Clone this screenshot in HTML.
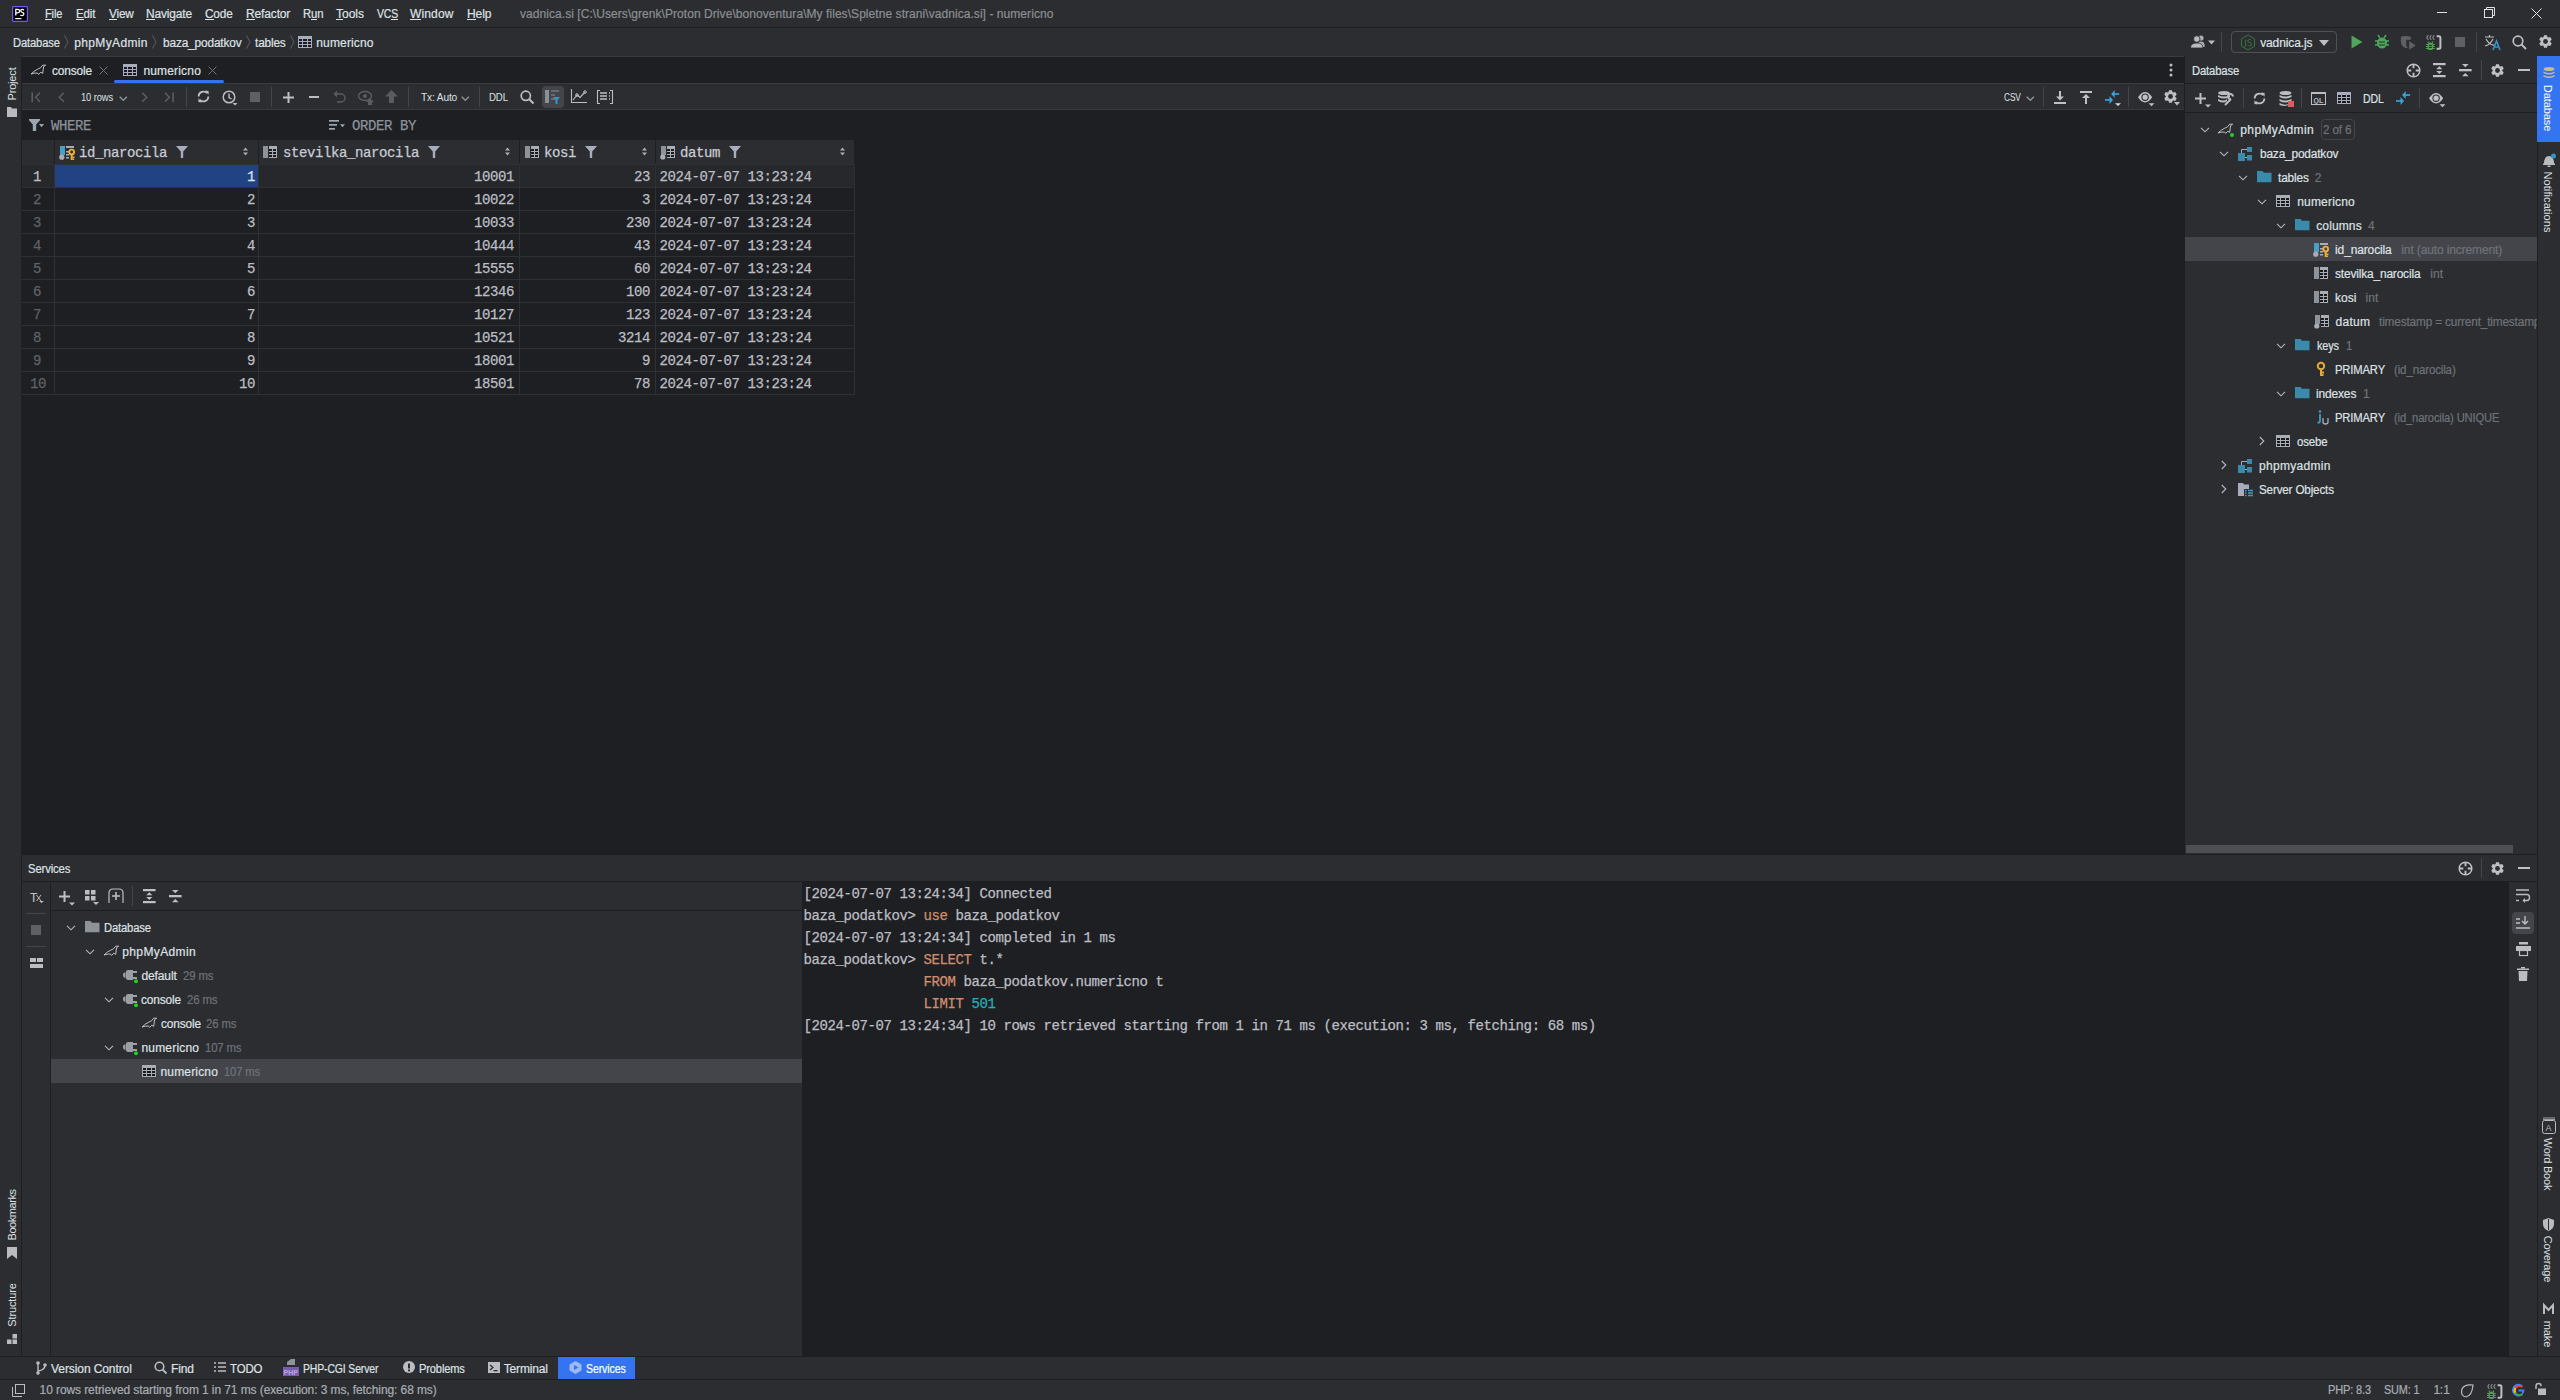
<!DOCTYPE html>
<html><head><meta charset="utf-8"><title>PhpStorm</title>
<style>
html,body{margin:0;padding:0;width:2560px;height:1400px;overflow:hidden;background:#1E1F22;}
div,svg{position:absolute;}
.t{white-space:pre;}
svg{overflow:visible;}
</style></head><body>
<div style="left:0px;top:0px;width:2560px;height:27px;background:#2B2D30;"></div>
<div style="left:0px;top:27px;width:2560px;height:1px;background:#1E1F22;"></div>
<div style="left:0px;top:28px;width:2560px;height:28px;background:#2B2D30;"></div>
<div style="left:0px;top:56px;width:21px;height:1300px;background:#2B2D30;"></div>
<div style="left:21px;top:56px;width:1px;height:1300px;background:#1E1F22;"></div>
<div style="left:2537px;top:56px;width:1px;height:1300px;background:#1E1F22;"></div>
<div style="left:2538px;top:56px;width:22px;height:1300px;background:#2B2D30;"></div>
<div style="left:22px;top:56px;width:2162px;height:1px;background:#393B40;"></div>
<div style="left:22px;top:57px;width:2162px;height:26px;background:#1E1F22;"></div>
<div style="left:22px;top:83px;width:2162px;height:1px;background:#393B40;"></div>
<div style="left:22px;top:84px;width:2162px;height:25px;background:#2B2D30;"></div>
<div style="left:22px;top:109px;width:2162px;height:1px;background:#393B40;"></div>
<div style="left:22px;top:110px;width:2162px;height:745px;background:#1E1F22;"></div>
<div style="left:2184px;top:56px;width:1px;height:800px;background:#1E1F22;"></div>
<div style="left:2185px;top:56px;width:352px;height:27px;background:#2B2D30;"></div>
<div style="left:2185px;top:83px;width:352px;height:1px;background:#1E1F22;"></div>
<div style="left:2185px;top:84px;width:352px;height:28px;background:#2B2D30;"></div>
<div style="left:2185px;top:112px;width:352px;height:1px;background:#1E1F22;"></div>
<div style="left:2185px;top:113px;width:352px;height:742px;background:#2B2D30;"></div>
<div style="left:2186px;top:845px;width:327px;height:8px;background:#4D4F53;border-radius:0"></div>
<div style="left:22px;top:854px;width:2515px;height:1px;background:#1E1F22;"></div>
<div style="left:22px;top:855px;width:2515px;height:26px;background:#2B2D30;"></div>
<div style="left:22px;top:881px;width:2515px;height:1px;background:#1E1F22;"></div>
<div style="left:22px;top:882px;width:28px;height:474px;background:#2B2D30;"></div>
<div style="left:50px;top:882px;width:1px;height:474px;background:#1E1F22;"></div>
<div style="left:51px;top:882px;width:751px;height:28px;background:#2B2D30;"></div>
<div style="left:51px;top:910px;width:751px;height:1px;background:#1E1F22;"></div>
<div style="left:51px;top:911px;width:751px;height:445px;background:#2B2D30;"></div>
<div style="left:802px;top:882px;width:1707px;height:474px;background:#1E1F22;"></div>
<div style="left:2508px;top:882px;width:1px;height:474px;background:#1E1F22;"></div>
<div style="left:2509px;top:882px;width:28px;height:474px;background:#2B2D30;"></div>
<div style="left:0px;top:1356px;width:2560px;height:1px;background:#1E1F22;"></div>
<div style="left:0px;top:1357px;width:2560px;height:22px;background:#2B2D30;"></div>
<div style="left:0px;top:1379px;width:2560px;height:1px;background:#1E1F22;"></div>
<div style="left:0px;top:1380px;width:2560px;height:20px;background:#2B2D30;"></div>
<svg style="left:12px;top:6px;" width="16" height="16" viewBox="0 0 16 16"><rect x="0.6" y="0.6" width="14.8" height="14.8" rx="0.8" fill="#000" stroke="#7357FF" stroke-width="1.2"/><path d="M3.8 9.6V3.4H5.8Q7.6 3.4 7.6 5.1Q7.6 6.8 5.8 6.8H3.8" fill="none" stroke="#fff" stroke-width="1.3"/><path d="M11.9 4.2Q11.2 3.4 10.2 3.4Q8.7 3.4 8.7 4.8Q8.7 5.9 10.2 6.3Q11.9 6.7 11.9 8.1Q11.9 9.6 10.1 9.6Q9 9.6 8.4 8.8" fill="none" stroke="#fff" stroke-width="1.3"/><rect x="3.2" y="12" width="6.2" height="1.2" fill="#fff"/></svg>
<div class="t" style="left:45px;top:8px;font:12px/12px 'Liberation Sans',sans-serif;color:#DFE1E5;letter-spacing:-0.150px;transform:scaleX(0.9207);transform-origin:0px 0;-webkit-text-stroke:0.2px #DFE1E5;">File</div>
<div style="left:45px;top:19px;width:7px;height:1px;background:#DFE1E5;"></div>
<div class="t" style="left:76px;top:8px;font:12px/12px 'Liberation Sans',sans-serif;color:#DFE1E5;letter-spacing:-0.150px;transform:scaleX(0.9611);transform-origin:0px 0;-webkit-text-stroke:0.2px #DFE1E5;">Edit</div>
<div style="left:76px;top:19px;width:8px;height:1px;background:#DFE1E5;"></div>
<div class="t" style="left:109px;top:8px;font:12px/12px 'Liberation Sans',sans-serif;color:#DFE1E5;letter-spacing:-0.150px;transform:scaleX(0.9785);transform-origin:0px 0;-webkit-text-stroke:0.2px #DFE1E5;">View</div>
<div style="left:109px;top:19px;width:8px;height:1px;background:#DFE1E5;"></div>
<div class="t" style="left:146px;top:8px;font:12px/12px 'Liberation Sans',sans-serif;color:#DFE1E5;letter-spacing:-0.150px;transform:scaleX(0.9957);transform-origin:0px 0;-webkit-text-stroke:0.2px #DFE1E5;">Navigate</div>
<div style="left:146px;top:19px;width:9px;height:1px;background:#DFE1E5;"></div>
<div class="t" style="left:205px;top:8px;font:12px/12px 'Liberation Sans',sans-serif;color:#DFE1E5;letter-spacing:-0.150px;transform:scaleX(0.9807);transform-origin:0px 0;-webkit-text-stroke:0.2px #DFE1E5;">Code</div>
<div style="left:205px;top:19px;width:9px;height:1px;background:#DFE1E5;"></div>
<div class="t" style="left:246px;top:8px;font:12px/12px 'Liberation Sans',sans-serif;color:#DFE1E5;letter-spacing:-0.143px;-webkit-text-stroke:0.2px #DFE1E5;">Refactor</div>
<div style="left:246px;top:19px;width:9px;height:1px;background:#DFE1E5;"></div>
<div class="t" style="left:303px;top:8px;font:12px/12px 'Liberation Sans',sans-serif;color:#DFE1E5;letter-spacing:-0.150px;transform:scaleX(0.9447);transform-origin:0px 0;-webkit-text-stroke:0.2px #DFE1E5;">Run</div>
<div style="left:311px;top:19px;width:6px;height:1px;background:#DFE1E5;"></div>
<div class="t" style="left:336px;top:8px;font:12px/12px 'Liberation Sans',sans-serif;color:#DFE1E5;letter-spacing:0.000px;-webkit-text-stroke:0.2px #DFE1E5;">Tools</div>
<div style="left:336px;top:19px;width:7px;height:1px;background:#DFE1E5;"></div>
<div class="t" style="left:377px;top:8px;font:12px/12px 'Liberation Sans',sans-serif;color:#DFE1E5;letter-spacing:-0.150px;transform:scaleX(0.8704);transform-origin:0px 0;-webkit-text-stroke:0.2px #DFE1E5;">VCS</div>
<div style="left:391px;top:19px;width:7px;height:1px;background:#DFE1E5;"></div>
<div class="t" style="left:410px;top:8px;font:12px/12px 'Liberation Sans',sans-serif;color:#DFE1E5;letter-spacing:0.150px;-webkit-text-stroke:0.2px #DFE1E5;">Window</div>
<div style="left:410px;top:19px;width:11px;height:1px;background:#DFE1E5;"></div>
<div class="t" style="left:467px;top:8px;font:12px/12px 'Liberation Sans',sans-serif;color:#DFE1E5;letter-spacing:-0.083px;-webkit-text-stroke:0.2px #DFE1E5;">Help</div>
<div style="left:467px;top:19px;width:9px;height:1px;background:#DFE1E5;"></div>
<div class="t" style="left:520px;top:8px;font:12px/12px 'Liberation Sans',sans-serif;color:#8C8F94;letter-spacing:0.059px;-webkit-text-stroke:0.2px #8C8F94;">vadnica.si [C:\Users\grenk\Proton Drive\bonoventura\My files\Spletne strani\vadnica.si] - numericno</div>
<div style="left:2437px;top:12px;width:10px;height:1px;background:#DFE1E5;"></div>
<svg style="left:2484px;top:7px;" width="11" height="11" viewBox="0 0 11 11"><rect x="0.5" y="2.5" width="8" height="8" fill="none" stroke="#DFE1E5"/><path d="M2.5 2.5V0.5H10.5V8.5H8.5" fill="none" stroke="#DFE1E5"/></svg>
<svg style="left:2531px;top:8px;" width="11" height="11" viewBox="0 0 11 11"><path d="M0.5 0.5L10.5 10.5M10.5 0.5L0.5 10.5" stroke="#DFE1E5" stroke-width="1"/></svg>
<div class="t" style="left:12.5px;top:37px;font:12px/12px 'Liberation Sans',sans-serif;color:#DFE1E5;letter-spacing:-0.150px;transform:scaleX(0.9323);transform-origin:0px 0;-webkit-text-stroke:0.2px #DFE1E5;">Database</div>
<svg style="left:64px;top:35px;" width="5" height="14" viewBox="0 0 5 14"><path d="M0.5 0.5L4 7L0.5 13.5" fill="none" stroke="#5A5D63" stroke-width="1"/></svg>
<div class="t" style="left:74.25px;top:37px;font:12px/12px 'Liberation Sans',sans-serif;color:#DFE1E5;letter-spacing:0.361px;-webkit-text-stroke:0.2px #DFE1E5;">phpMyAdmin</div>
<svg style="left:152px;top:35px;" width="5" height="14" viewBox="0 0 5 14"><path d="M0.5 0.5L4 7L0.5 13.5" fill="none" stroke="#5A5D63" stroke-width="1"/></svg>
<div class="t" style="left:162.5px;top:37px;font:12px/12px 'Liberation Sans',sans-serif;color:#DFE1E5;letter-spacing:-0.150px;transform:scaleX(0.9880);transform-origin:0px 0;-webkit-text-stroke:0.2px #DFE1E5;">baza_podatkov</div>
<svg style="left:246px;top:35px;" width="5" height="14" viewBox="0 0 5 14"><path d="M0.5 0.5L4 7L0.5 13.5" fill="none" stroke="#5A5D63" stroke-width="1"/></svg>
<div class="t" style="left:255px;top:37px;font:12px/12px 'Liberation Sans',sans-serif;color:#DFE1E5;letter-spacing:-0.150px;transform:scaleX(0.9840);transform-origin:0px 0;-webkit-text-stroke:0.2px #DFE1E5;">tables</div>
<svg style="left:290px;top:35px;" width="5" height="14" viewBox="0 0 5 14"><path d="M0.5 0.5L4 7L0.5 13.5" fill="none" stroke="#5A5D63" stroke-width="1"/></svg>
<svg style="left:298px;top:36px;" width="14" height="12" viewBox="0 0 14 12"><rect x="0" y="0" width="14" height="12" fill="#A8ADBD"/><rect x="1" y="3" width="3" height="2" fill="#1A1B1E"/><rect x="5" y="3" width="4" height="2" fill="#1A1B1E"/><rect x="10" y="3" width="3" height="2" fill="#1A1B1E"/><rect x="1" y="6" width="3" height="2" fill="#1A1B1E"/><rect x="5" y="6" width="4" height="2" fill="#1A1B1E"/><rect x="10" y="6" width="3" height="2" fill="#1A1B1E"/><rect x="1" y="9" width="3" height="2" fill="#1A1B1E"/><rect x="5" y="9" width="4" height="2" fill="#1A1B1E"/><rect x="10" y="9" width="3" height="2" fill="#1A1B1E"/></svg>
<div class="t" style="left:316.25px;top:37px;font:12px/12px 'Liberation Sans',sans-serif;color:#DFE1E5;letter-spacing:0.156px;-webkit-text-stroke:0.2px #DFE1E5;">numericno</div>
<svg style="left:2190px;top:35px;" width="26" height="14" viewBox="0 0 26 14"><circle cx="11" cy="3" r="2.6" fill="#A9ACB1"/><path d="M8 13V9.5Q8 6.5 11 6.5Q14.6 6.5 14.6 10.5V12H8Z" fill="#A9ACB1"/><circle cx="6.8" cy="4" r="3.2" fill="#B8BABF" stroke="#2B2D30" stroke-width="0.8"/><path d="M0.5 13Q0.5 8 6.8 8Q13 8 13 13Z" fill="#B8BABF" stroke="#2B2D30" stroke-width="0.8"/><path d="M18 5.5H25L21.5 9.5Z" fill="#B8BABF"/></svg>
<div style="left:2221px;top:32px;width:1px;height:20px;background:#43454A;"></div>
<div style="left:2231px;top:31px;width:106px;height:22px;background:transparent;border:1px solid #4E5157;border-radius:4px;box-sizing:border-box"></div>
<svg style="left:2240px;top:34px;" width="16" height="17" viewBox="0 0 16 17"><path d="M8 1L14.5 4.8V12.2L8 16L1.5 12.2V4.8Z" fill="none" stroke="#3B7A43" stroke-width="0.9"/><path d="M5.6 5.5V11.5Q5.6 13 4.2 13" fill="none" stroke="#3B7A43" stroke-width="0.9"/><path d="M11.5 6.4Q10.8 5.5 9.6 5.5Q7.8 5.5 7.8 7Q7.8 8.3 9.6 8.6Q11.6 8.9 11.6 10.3Q11.6 11.7 9.6 11.7Q8.2 11.7 7.6 10.8" fill="none" stroke="#3B7A43" stroke-width="0.9"/></svg>
<div class="t" style="left:2260.2px;top:37px;font:12px/12px 'Liberation Sans',sans-serif;color:#DFE1E5;letter-spacing:-0.122px;-webkit-text-stroke:0.2px #DFE1E5;">vadnica.js</div>
<svg style="left:2319px;top:40px;" width="10" height="6" viewBox="0 0 10 6"><path d="M0 0H10L5 6Z" fill="#BBBDC1"/></svg>
<svg style="left:2351px;top:35px;" width="12" height="14" viewBox="0 0 12 14"><path d="M0.5 0.5L11.5 7L0.5 13.5Z" fill="#4FA65B"/></svg>
<svg style="left:2375px;top:34px;" width="14" height="15" viewBox="0 0 14 15"><ellipse cx="7" cy="9" rx="5" ry="5.5" fill="#4FA65B"/><path d="M3 1L5 4M11 1L9 4M0 7H3M11 7H14M0 11H3M11 11H14M3 9H11" stroke="#4FA65B" stroke-width="1.4"/><path d="M4 8H10M4 11H10" stroke="#2B2D30" stroke-width="1.2"/></svg>
<svg style="left:2396px;top:30px;" width="22" height="22" viewBox="0 0 22 22"><path d="M4.9 6.8Q9.8 5.4 14.8 6.8V9.8H10.2V16Q10.2 16.9 11.6 16.3V17.3Q10.6 18.2 9.8 18.2Q4.9 16 4.9 11.5Z" fill="#5E6064"/><path d="M13.1 11.1V19.7L19.7 15.4Z" fill="#5E6064"/></svg>
<svg style="left:2426.4px;top:35px;" width="16" height="16" viewBox="0 0 16 16"><path d="M2.2 4.8C0.7 3.6 0.7 1.4 2.2 0.2M5.2 4.8C3.7 3.6 3.7 1.4 5.2 0.2M8.2 4.8C6.7 3.6 6.7 1.4 8.2 0.2" fill="none" stroke="#BEC0C4" stroke-width="0.9"/><path d="M10.6 1.3H12.9Q14.4 1.3 14.4 2.8V12.2Q14.4 13.7 12.9 13.7H10.6" fill="none" stroke="#BEC0C4" stroke-width="2"/><rect x="1.6" y="7.6" width="5.6" height="7.4" rx="2.6" fill="#4DA64D"/><path d="M0 9.5H8.8M0 11.5H8.8M0 13.5H8.8M2.6 7.9L1.9 6.6M6.2 7.9L6.9 6.6" stroke="#4DA64D" stroke-width="1.1"/><rect x="2.9" y="9.9" width="3" height="1.1" fill="#2B2D30"/><rect x="2.9" y="11.9" width="3" height="1.1" fill="#2B2D30"/></svg>
<div style="left:2455px;top:37px;width:10px;height:10px;background:#5E6064;"></div>
<div style="left:2476px;top:32px;width:1px;height:20px;background:#43454A;"></div>
<svg style="left:2484px;top:34px;" width="17" height="16" viewBox="0 0 17 16"><path d="M1 3H10M5.5 1V3M2 5Q6 12 11 11M9 5Q6 11 1 12" fill="none" stroke="#BBBDC1" stroke-width="1.2"/><path d="M9 16L12.5 7L16 16M10.5 13H14.5" fill="none" stroke="#3592C4" stroke-width="1.6"/></svg>
<svg style="left:2512px;top:35px;" width="15" height="15" viewBox="0 0 15 15"><circle cx="6" cy="6" r="4.8" fill="none" stroke="#BBBDC1" stroke-width="1.7"/><path d="M9.5 9.5L14 14" stroke="#BBBDC1" stroke-width="2"/></svg>
<svg style="left:2539px;top:35px;" width="13" height="13" viewBox="0 0 13 13"><g transform="scale(1.0)"><path d="M4.44 2.28L5.04 0.17L7.96 0.17L8.56 2.28L9.13 2.60L11.25 2.07L12.72 4.60L11.19 6.17L11.19 6.83L12.72 8.40L11.25 10.93L9.13 10.40L8.56 10.72L7.96 12.83L5.04 12.83L4.44 10.72L3.87 10.40L1.75 10.93L0.28 8.40L1.81 6.83L1.81 6.17L0.28 4.60L1.75 2.07L3.87 2.60Z" fill="#BEC0C4"/><circle cx="6.5" cy="6.5" r="2.4" fill="#2B2D30"/></g></svg>
<div style="left:12.2px;top:83.9px;width:0;height:0"><div style="position:absolute;left:0;top:0;transform:translate(-50%,-50%) rotate(-90deg);font:11px/11px 'Liberation Sans',sans-serif;letter-spacing:-0.167px;color:#DFE1E5;white-space:nowrap">Project</div></div>
<svg style="left:7px;top:107px;" width="10" height="10" viewBox="0 0 10 10"><path d="M0 0H4L5 1.5H10V10H0Z" fill="#B9BBBE"/></svg>
<div style="left:12.2px;top:1215.2px;width:0;height:0"><div style="position:absolute;left:0;top:0;transform:translate(-50%,-50%) rotate(-90deg);font:11px/11px 'Liberation Sans',sans-serif;letter-spacing:-0.450px;color:#DFE1E5;white-space:nowrap">Bookmarks</div></div>
<svg style="left:7px;top:1247px;" width="10" height="12" viewBox="0 0 10 12"><path d="M0 0H10V12L5 8L0 12Z" fill="#B9BBBE"/></svg>
<div style="left:12.2px;top:1305.0px;width:0;height:0"><div style="position:absolute;left:0;top:0;transform:translate(-50%,-50%) rotate(-90deg);font:11px/11px 'Liberation Sans',sans-serif;letter-spacing:-0.125px;color:#DFE1E5;white-space:nowrap">Structure</div></div>
<svg style="left:7px;top:1334px;" width="10" height="10" viewBox="0 0 10 10"><rect x="5.5" y="0" width="4.5" height="4.5" fill="#B9BBBE"/><rect x="0" y="5.5" width="4.5" height="4.5" fill="#B9BBBE"/><rect x="5.5" y="5.5" width="4.5" height="4.5" fill="#B9BBBE"/></svg>
<div style="left:2537px;top:56px;width:23px;height:86px;background:#3574F0;"></div>
<svg style="left:2543px;top:67px;" width="12" height="13" viewBox="0 0 12 13"><ellipse cx="6" cy="2" rx="5.5" ry="2" fill="#C7B99A"/><path d="M0.5 4.5Q6 7.5 11.5 4.5V6Q6 9 0.5 6ZM0.5 8Q6 11 11.5 8V9.5Q6 12.5 0.5 9.5Z" fill="#C7B99A"/></svg>
<div style="left:2546.5px;top:108.2px;width:0;height:0"><div style="position:absolute;left:0;top:0;transform:translate(-50%,-50%) rotate(90deg);font:11px/11px 'Liberation Sans',sans-serif;letter-spacing:-0.086px;color:#FFFFFF;white-space:nowrap">Database</div></div>
<svg style="left:2542px;top:153px;" width="14" height="14" viewBox="0 0 14 14"><path d="M2 11Q2 3 7 3Q12 3 12 11Z" fill="#B9BBBE"/><rect x="1" y="10.5" width="12" height="1.5" fill="#B9BBBE"/><rect x="5.5" y="12.5" width="3" height="1.5" fill="#B9BBBE"/><circle cx="11.5" cy="3" r="2.5" fill="#3592C4"/></svg>
<div style="left:2546.5px;top:201.5px;width:0;height:0"><div style="position:absolute;left:0;top:0;transform:translate(-50%,-50%) rotate(90deg);font:11px/11px 'Liberation Sans',sans-serif;letter-spacing:0.083px;color:#DFE1E5;white-space:nowrap">Notifications</div></div>
<svg style="left:2542px;top:1117px;" width="14" height="17" viewBox="0 0 14 17"><rect x="0.5" y="3.5" width="13" height="13" rx="2" fill="none" stroke="#B9BBBE"/><path d="M1 1H13M1 2.5H13" stroke="#B9BBBE" stroke-width="0.8"/><text x="3.5" y="13.5" font-family="Liberation Sans" font-size="9" fill="#B9BBBE">A</text></svg>
<div style="left:2546.5px;top:1164.25px;width:0;height:0"><div style="position:absolute;left:0;top:0;transform:translate(-50%,-50%) rotate(90deg);font:11px/11px 'Liberation Sans',sans-serif;letter-spacing:-0.188px;color:#DFE1E5;white-space:nowrap">Word Book</div></div>
<svg style="left:2543px;top:1218px;" width="11" height="13" viewBox="0 0 11 13"><path d="M5.5 0L11 2V6Q11 11 5.5 13Q0 11 0 6V2Z" fill="#B9BBBE"/><path d="M5.5 1V12" stroke="#2B2D30" stroke-width="1"/></svg>
<div style="left:2546.5px;top:1258.5px;width:0;height:0"><div style="position:absolute;left:0;top:0;transform:translate(-50%,-50%) rotate(90deg);font:11px/11px 'Liberation Sans',sans-serif;letter-spacing:-0.143px;color:#DFE1E5;white-space:nowrap">Coverage</div></div>
<svg style="left:2543px;top:1304px;" width="11" height="10" viewBox="0 0 11 10"><path d="M1 10V1L5.5 6L10 1V10" fill="none" stroke="#B9BBBE" stroke-width="2"/></svg>
<div style="left:2546.5px;top:1334.1px;width:0;height:0"><div style="position:absolute;left:0;top:0;transform:translate(-50%,-50%) rotate(90deg);font:11px/11px 'Liberation Sans',sans-serif;letter-spacing:-0.067px;color:#DFE1E5;white-space:nowrap">make</div></div>
<svg style="left:26.7px;top:60.8px;" width="21" height="18" viewBox="0 0 21 18"><path d="M4 13 L7.5 10 Q11 8 13.8 6.6 L15.6 4.2 L18.7 4.2 L16.6 5.6 L15.7 12.4 L13.8 11.2 L11.6 13.4 L10.5 12 Q7 11.8 4 13 Z" fill="none" stroke="#BFC1C6" stroke-width="1" stroke-linejoin="round"/></svg>
<div class="t" style="left:51.5px;top:65px;font:12px/12px 'Liberation Sans',sans-serif;color:#DFE1E5;letter-spacing:-0.150px;transform:scaleX(0.9878);transform-origin:0px 0;-webkit-text-stroke:0.2px #DFE1E5;">console</div>
<svg style="left:99px;top:66px;" width="9" height="9" viewBox="0 0 9 9"><path d="M0.5 0.5L8.5 8.5M8.5 0.5L0.5 8.5" stroke="#6F737A" stroke-width="1"/></svg>
<svg style="left:123px;top:64px;" width="14" height="12" viewBox="0 0 14 12"><rect x="0" y="0" width="14" height="12" fill="#A8ADBD"/><rect x="1" y="3" width="3" height="2" fill="#1A1B1E"/><rect x="5" y="3" width="4" height="2" fill="#1A1B1E"/><rect x="10" y="3" width="3" height="2" fill="#1A1B1E"/><rect x="1" y="6" width="3" height="2" fill="#1A1B1E"/><rect x="5" y="6" width="4" height="2" fill="#1A1B1E"/><rect x="10" y="6" width="3" height="2" fill="#1A1B1E"/><rect x="1" y="9" width="3" height="2" fill="#1A1B1E"/><rect x="5" y="9" width="4" height="2" fill="#1A1B1E"/><rect x="10" y="9" width="3" height="2" fill="#1A1B1E"/></svg>
<div class="t" style="left:143.4px;top:65px;font:12px/12px 'Liberation Sans',sans-serif;color:#DFE1E5;letter-spacing:0.175px;-webkit-text-stroke:0.2px #DFE1E5;">numericno</div>
<svg style="left:208px;top:66px;" width="9" height="9" viewBox="0 0 9 9"><path d="M0.5 0.5L8.5 8.5M8.5 0.5L0.5 8.5" stroke="#6F737A" stroke-width="1"/></svg>
<div style="left:114px;top:80px;width:110px;height:3px;background:#3574F0;border-radius:2px"></div>
<svg style="left:2168px;top:63px;" width="6" height="14" viewBox="0 0 6 14"><circle cx="3" cy="2" r="1.5" fill="#BBBDC1"/><circle cx="3" cy="7" r="1.5" fill="#BBBDC1"/><circle cx="3" cy="12" r="1.5" fill="#BBBDC1"/></svg>
<svg style="left:30.5px;top:91.5px;" width="11" height="11" viewBox="0 0 11 11"><rect x="0.4" y="0.4" width="1.6" height="9.8" fill="#5A5D62"/><path d="M9 0.9L4.6 5.3L9 9.7" fill="none" stroke="#5A5D62" stroke-width="1.5"/></svg>
<svg style="left:57.5px;top:91.5px;" width="8" height="11" viewBox="0 0 8 11"><path d="M5.8 0.9L1.3 5.3L5.8 9.7" fill="none" stroke="#5A5D62" stroke-width="1.5"/></svg>
<div class="t" style="left:81.4px;top:92px;font:11px/11px 'Liberation Sans',sans-serif;color:#DFE1E5;letter-spacing:-0.150px;transform:scaleX(0.8530);transform-origin:0px 0;-webkit-text-stroke:0px #DFE1E5;">10 rows</div>
<svg style="left:119px;top:95.5px;" width="9" height="5" viewBox="0 0 9 5"><path d="M0.7 0.7L4.3 4.3L7.9 0.7" fill="none" stroke="#8C9098" stroke-width="1.5"/></svg>
<svg style="left:140.5px;top:91.5px;" width="8" height="11" viewBox="0 0 8 11"><path d="M1.2 0.9L5.7 5.3L1.2 9.7" fill="none" stroke="#5A5D62" stroke-width="1.5"/></svg>
<svg style="left:164px;top:91.5px;" width="11" height="11" viewBox="0 0 11 11"><rect x="8.3" y="0.4" width="1.6" height="9.8" fill="#5A5D62"/><path d="M1 0.9L5.4 5.3L1 9.7" fill="none" stroke="#5A5D62" stroke-width="1.5"/></svg>
<div style="left:186px;top:87px;width:1px;height:20px;background:#43454A;"></div>
<svg style="left:197px;top:90px;" width="13" height="13" viewBox="0 0 13 13"><path d="M1.6 6.5A4.9 4.9 0 0 1 10.2 3.3M11.4 6.5A4.9 4.9 0 0 1 2.8 9.7" fill="none" stroke="#BEC0C4" stroke-width="1.7"/><path d="M8 0.6L11.6 1V4.8ZM5 12.4L1.4 12V8.2Z" fill="#BEC0C4"/></svg>
<svg style="left:222px;top:90px;" width="16" height="16" viewBox="0 0 16 16"><circle cx="7" cy="7" r="5.8" fill="none" stroke="#BBBDC1" stroke-width="1.5"/><path d="M7 3.5V7.5L9.5 9" fill="none" stroke="#BBBDC1" stroke-width="1.4"/><path d="M10.5 13H15.5L13 15.5Z" fill="#BBBDC1"/></svg>
<div style="left:250px;top:92px;width:10px;height:10px;background:#5E6064;"></div>
<div style="left:271px;top:87px;width:1px;height:20px;background:#43454A;"></div>
<svg style="left:283px;top:92px;" width="17" height="15" viewBox="0 0 17 15"><rect x="4.5" y="0" width="2" height="11" fill="#BEC0C4"/><rect x="0" y="4.5" width="11" height="2" fill="#BEC0C4"/></svg>
<div style="left:309px;top:96px;width:10px;height:2px;background:#BBBDC1;"></div>
<svg style="left:333px;top:90px;" width="13" height="13" viewBox="0 0 13 13"><path d="M3 4H8A4 4 0 0 1 8 12H4" fill="none" stroke="#595C61" stroke-width="1.4"/><path d="M0.5 4L4 0.5V7.5Z" fill="#595C61"/></svg>
<svg style="left:358px;top:90px;" width="16" height="15" viewBox="0 0 16 15"><ellipse cx="7" cy="6" rx="6.5" ry="4.5" fill="none" stroke="#595C61" stroke-width="1.4"/><circle cx="7" cy="6" r="2" fill="#595C61"/><path d="M12 8L16 12H14V15H10V12H8Z" fill="#595C61"/></svg>
<svg style="left:385px;top:90px;" width="13" height="13" viewBox="0 0 13 13"><path d="M6.5 0L13 6.5H9V13H4V6.5H0Z" fill="#595C61"/></svg>
<div style="left:408px;top:87px;width:1px;height:20px;background:#43454A;"></div>
<div class="t" style="left:420.8px;top:92px;font:11px/11px 'Liberation Sans',sans-serif;color:#DFE1E5;letter-spacing:-0.150px;transform:scaleX(0.9217);transform-origin:0px 0;-webkit-text-stroke:0px #DFE1E5;">Tx: Auto</div>
<svg style="left:461px;top:95.5px;" width="9" height="5" viewBox="0 0 9 5"><path d="M0.7 0.7L4.3 4.3L7.9 0.7" fill="none" stroke="#8C9098" stroke-width="1.5"/></svg>
<div style="left:479px;top:87px;width:1px;height:20px;background:#43454A;"></div>
<div class="t" style="left:489px;top:92px;font:11px/11px 'Liberation Sans',sans-serif;color:#DFE1E5;letter-spacing:-0.150px;transform:scaleX(0.8756);transform-origin:0px 0;-webkit-text-stroke:0px #DFE1E5;">DDL</div>
<svg style="left:520px;top:90px;" width="14" height="14" viewBox="0 0 14 14"><circle cx="5.8" cy="5.8" r="4.6" fill="none" stroke="#BBBDC1" stroke-width="1.7"/><path d="M9.3 9.3L13.5 13.5" stroke="#BBBDC1" stroke-width="2"/></svg>
<div style="left:542px;top:86px;width:22px;height:22px;background:#43454A;border-radius:4px"></div>
<svg style="left:545px;top:90px;" width="16" height="14" viewBox="0 0 16 14"><rect x="0" y="0" width="4" height="13" fill="#8C9098"/><path d="M6 1H14M6 5H10M6 9H10" stroke="#8C9098" stroke-width="1.2"/><path d="M8 7H15L12.5 10V14H10.5V10Z" fill="#3592C4"/></svg>
<svg style="left:571px;top:89px;" width="16" height="14" viewBox="0 0 16 14"><path d="M0.5 0V13.5H16" fill="none" stroke="#BBBDC1" stroke-width="1.1"/><path d="M2 11L6 6L9 8.5L14 3" fill="none" stroke="#BBBDC1" stroke-width="1.2"/><circle cx="6" cy="6" r="1.3" fill="none" stroke="#BBBDC1"/><circle cx="14" cy="3" r="1.3" fill="none" stroke="#BBBDC1"/></svg>
<svg style="left:597px;top:90px;" width="16" height="14" viewBox="0 0 16 14"><path d="M3 0.5H0.5V13.5H3M13 0.5H15.5V13.5H13" fill="none" stroke="#BBBDC1" stroke-width="1.1"/><path d="M3 3H10M3 6H10M3 9H10M12 3H13M12 6H13M12 9H13" stroke="#BBBDC1" stroke-width="1.3"/></svg>
<div class="t" style="left:2003.8px;top:93px;font:10px/10px 'Liberation Sans',sans-serif;color:#DFE1E5;letter-spacing:-0.150px;transform:scaleX(0.8309);transform-origin:0px 0;-webkit-text-stroke:0px #DFE1E5;">CSV</div>
<svg style="left:2026px;top:95.5px;" width="9" height="5" viewBox="0 0 9 5"><path d="M0.7 0.7L4.3 4.3L7.9 0.7" fill="none" stroke="#8C9098" stroke-width="1.5"/></svg>
<div style="left:2043px;top:87px;width:1px;height:20px;background:#43454A;"></div>
<svg style="left:2054px;top:90.5px;" width="12" height="13" viewBox="0 0 12 13"><rect x="5" y="0" width="2" height="6" fill="#BEC0C4"/><path d="M2 5.5H10L6 9.5Z" fill="#BEC0C4"/><rect x="0" y="11" width="12" height="2" fill="#BEC0C4"/></svg>
<svg style="left:2080px;top:90.5px;" width="12" height="13" viewBox="0 0 12 13"><rect x="0" y="0" width="12" height="2" fill="#BEC0C4"/><path d="M2 7H10L6 3Z" fill="#BEC0C4"/><rect x="5" y="6.5" width="2" height="6.5" fill="#BEC0C4"/></svg>
<svg style="left:2104.9px;top:89.9px;" width="17" height="17" viewBox="0 0 17 17"><path d="M6.1 4L9.7 0V8.1Z" fill="#3BA1DA"/><rect x="9.2" y="3.2" width="4.9" height="1.7" fill="#3BA1DA"/><path d="M8 9.9L4.5 6.1V14Z" fill="#3BA1DA"/><rect x="0" y="9.1" width="5" height="1.7" fill="#3BA1DA"/><path d="M10 13.2H16L13 16.1Z" fill="#DCDDE0"/></svg>
<div style="left:2128px;top:87px;width:1px;height:20px;background:#43454A;"></div>
<svg style="left:2138px;top:92px;" width="17" height="15" viewBox="0 0 17 15"><path d="M0 5.2Q7.1 -5.2 14.2 5.2Q7.1 15.6 0 5.2Z" fill="#BEC0C4"/><circle cx="7.1" cy="5.2" r="3.7" fill="#2B2D30"/><circle cx="7.1" cy="5.2" r="2.6" fill="#BEC0C4"/><path d="M10.5 11.2H16.5L13.5 14.2Z" fill="#BEC0C4"/></svg>
<svg style="left:2164px;top:90px;" width="13" height="13" viewBox="0 0 13 13"><g transform="scale(1.0)"><path d="M4.44 2.28L5.04 0.17L7.96 0.17L8.56 2.28L9.13 2.60L11.25 2.07L12.72 4.60L11.19 6.17L11.19 6.83L12.72 8.40L11.25 10.93L9.13 10.40L8.56 10.72L7.96 12.83L5.04 12.83L4.44 10.72L3.87 10.40L1.75 10.93L0.28 8.40L1.81 6.83L1.81 6.17L0.28 4.60L1.75 2.07L3.87 2.60Z" fill="#BEC0C4"/><circle cx="6.5" cy="6.5" r="2.4" fill="#2B2D30"/></g></svg>
<svg style="left:2174px;top:102px;" width="6" height="3.5" viewBox="0 0 6 3.5"><path d="M0 0H6L3.0 3.5Z" fill="#BEC0C4"/></svg>
<svg style="left:29px;top:119px;" width="16" height="13" viewBox="0 0 16 13"><path d="M0 0H11V1.2L7.2 5.6V12H3.8V5.6L0 1.2Z" fill="#9AA6B0"/><path d="M10 5H15L12.5 8.3Z" fill="#9AA6B0"/></svg>
<div class="t" style="left:51px;top:119px;font:14px/14px 'Liberation Mono',monospace;letter-spacing:-0.4px;color:#8C9098;-webkit-text-stroke:0.25px #8C9098;">WHERE</div>
<svg style="left:329px;top:120px;" width="17" height="12" viewBox="0 0 17 12"><rect x="0" y="0" width="10" height="1.7" fill="#9AA6B0"/><rect x="0" y="4" width="8" height="1.7" fill="#9AA6B0"/><rect x="0" y="8" width="6" height="1.7" fill="#9AA6B0"/><path d="M11 4.2H16L13.5 7.3Z" fill="#9AA6B0"/></svg>
<div class="t" style="left:352px;top:119px;font:14px/14px 'Liberation Mono',monospace;letter-spacing:-0.4px;color:#8C9098;-webkit-text-stroke:0.25px #8C9098;">ORDER BY</div>
<div style="left:22px;top:140px;width:832px;height:24px;background:#2B2D30;"></div>
<div style="left:258px;top:140px;width:1px;height:24px;background:#1E1F22;"></div>
<div style="left:519px;top:140px;width:1px;height:24px;background:#1E1F22;"></div>
<div style="left:655px;top:140px;width:1px;height:24px;background:#1E1F22;"></div>
<div style="left:854px;top:140px;width:1px;height:24px;background:#1E1F22;"></div>
<div style="left:54px;top:140px;width:1px;height:24px;background:#1E1F22;"></div>
<svg style="left:58px;top:146px;" width="18" height="15" viewBox="0 0 18 15"><g transform="translate(2,0)"><rect x="0" y="0" width="5" height="9" fill="#4A9FC6"/><circle cx="1.8" cy="11.2" r="2.6" fill="#A9AEB5"/><rect x="6" y="0" width="8" height="2" fill="#A9AEB5"/><rect x="6" y="5" width="3" height="1.5" fill="#A9AEB5"/><rect x="6" y="8" width="3" height="1.5" fill="#A9AEB5"/><rect x="6" y="11" width="3" height="1.5" fill="#A9AEB5"/><circle cx="11.7" cy="6" r="2.4" fill="none" stroke="#F0AE3C" stroke-width="1.9"/><rect x="10.7" y="8" width="2" height="6" fill="#F0AE3C"/><rect x="12.5" y="10.5" width="2" height="1.6" fill="#F0AE3C"/><rect x="12.5" y="12.6" width="1.6" height="1.4" fill="#F0AE3C"/></g></svg>
<div class="t" style="left:79px;top:146px;font:14px/14px 'Liberation Mono',monospace;letter-spacing:-0.4px;color:#C9CCD6;-webkit-text-stroke:0.25px #C9CCD6;">id_narocila</div>
<svg style="left:176px;top:146px;" width="12" height="12" viewBox="0 0 12 12"><path d="M0 0H12L7.199999999999999 5.4V12H4.800000000000001V5.4Z" fill="#A8ADBD"/></svg>
<svg style="left:243px;top:147px;" width="5" height="9" viewBox="0 0 5 9"><path d="M0 3.6L2.5 0.6L5 3.6ZM0 5.4L2.5 8.4L5 5.4Z" fill="#A9AEB5"/></svg>
<svg style="left:263px;top:146px;" width="14" height="12" viewBox="0 0 14 12"><rect x="0" y="0" width="5" height="12" fill="#8E9399"/><rect x="6" y="0" width="8" height="12" fill="#A9AEB5"/><rect x="6" y="3" width="3" height="2" fill="#1A1B1E"/><rect x="10" y="3" width="3" height="2" fill="#1A1B1E"/><rect x="6" y="6" width="3" height="2" fill="#1A1B1E"/><rect x="10" y="6" width="3" height="2" fill="#1A1B1E"/><rect x="6" y="9" width="3" height="2" fill="#1A1B1E"/><rect x="10" y="9" width="3" height="2" fill="#1A1B1E"/></svg>
<div class="t" style="left:283px;top:146px;font:14px/14px 'Liberation Mono',monospace;letter-spacing:-0.4px;color:#C9CCD6;-webkit-text-stroke:0.25px #C9CCD6;">stevilka_narocila</div>
<svg style="left:428px;top:146px;" width="12" height="12" viewBox="0 0 12 12"><path d="M0 0H12L7.199999999999999 5.4V12H4.800000000000001V5.4Z" fill="#A8ADBD"/></svg>
<svg style="left:505px;top:147px;" width="5" height="9" viewBox="0 0 5 9"><path d="M0 3.6L2.5 0.6L5 3.6ZM0 5.4L2.5 8.4L5 5.4Z" fill="#A9AEB5"/></svg>
<svg style="left:525px;top:146px;" width="14" height="12" viewBox="0 0 14 12"><rect x="0" y="0" width="5" height="12" fill="#8E9399"/><rect x="6" y="0" width="8" height="12" fill="#A9AEB5"/><rect x="6" y="3" width="3" height="2" fill="#1A1B1E"/><rect x="10" y="3" width="3" height="2" fill="#1A1B1E"/><rect x="6" y="6" width="3" height="2" fill="#1A1B1E"/><rect x="10" y="6" width="3" height="2" fill="#1A1B1E"/><rect x="6" y="9" width="3" height="2" fill="#1A1B1E"/><rect x="10" y="9" width="3" height="2" fill="#1A1B1E"/></svg>
<div class="t" style="left:544px;top:146px;font:14px/14px 'Liberation Mono',monospace;letter-spacing:-0.4px;color:#C9CCD6;-webkit-text-stroke:0.25px #C9CCD6;">kosi</div>
<svg style="left:585px;top:146px;" width="12" height="12" viewBox="0 0 12 12"><path d="M0 0H12L7.199999999999999 5.4V12H4.800000000000001V5.4Z" fill="#A8ADBD"/></svg>
<svg style="left:642px;top:147px;" width="5" height="9" viewBox="0 0 5 9"><path d="M0 3.6L2.5 0.6L5 3.6ZM0 5.4L2.5 8.4L5 5.4Z" fill="#A9AEB5"/></svg>
<svg style="left:659px;top:146px;" width="16" height="14" viewBox="0 0 16 14"><g transform="translate(2,0)"><rect x="0" y="0" width="5" height="9" fill="#8E9399"/><circle cx="1.8" cy="11" r="2.6" fill="#A9AEB5"/><rect x="6" y="0" width="8" height="12" fill="#A9AEB5"/><rect x="6" y="3" width="3" height="2" fill="#1A1B1E"/><rect x="10" y="3" width="3" height="2" fill="#1A1B1E"/><rect x="6" y="6" width="3" height="2" fill="#1A1B1E"/><rect x="10" y="6" width="3" height="2" fill="#1A1B1E"/><rect x="6" y="9" width="3" height="2" fill="#1A1B1E"/><rect x="10" y="9" width="3" height="2" fill="#1A1B1E"/></g></svg>
<div class="t" style="left:680px;top:146px;font:14px/14px 'Liberation Mono',monospace;letter-spacing:-0.4px;color:#C9CCD6;-webkit-text-stroke:0.25px #C9CCD6;">datum</div>
<svg style="left:729px;top:146px;" width="12" height="12" viewBox="0 0 12 12"><path d="M0 0H12L7.199999999999999 5.4V12H4.800000000000001V5.4Z" fill="#A8ADBD"/></svg>
<svg style="left:840px;top:147px;" width="5" height="9" viewBox="0 0 5 9"><path d="M0 3.6L2.5 0.6L5 3.6ZM0 5.4L2.5 8.4L5 5.4Z" fill="#A9AEB5"/></svg>
<div style="left:22px;top:164px;width:833px;height:1px;background:#2E3033;"></div>
<div style="left:22px;top:165px;width:832px;height:22px;background:#26282B;"></div>
<div style="left:55px;top:165px;width:203px;height:22px;background:#214283;"></div>
<div style="left:54px;top:165px;width:1px;height:22px;background:#2E3033;"></div>
<div style="left:258px;top:165px;width:1px;height:22px;background:#2E3033;"></div>
<div style="left:519px;top:165px;width:1px;height:22px;background:#2E3033;"></div>
<div style="left:655px;top:165px;width:1px;height:22px;background:#2E3033;"></div>
<div style="left:854px;top:165px;width:1px;height:22px;background:#2E3033;"></div>
<div class="t" style="left:33.00px;top:170px;font:14px/14px 'Liberation Mono',monospace;letter-spacing:-0.4px;color:#BCBEC4;-webkit-text-stroke:0.25px #BCBEC4;">1</div>
<div class="t" style="left:247.00px;top:170px;font:14px/14px 'Liberation Mono',monospace;letter-spacing:-0.4px;color:#DFE1E5;-webkit-text-stroke:0.25px #DFE1E5;">1</div>
<div class="t" style="left:474.00px;top:170px;font:14px/14px 'Liberation Mono',monospace;letter-spacing:-0.4px;color:#BCBEC4;-webkit-text-stroke:0.25px #BCBEC4;">10001</div>
<div class="t" style="left:634.00px;top:170px;font:14px/14px 'Liberation Mono',monospace;letter-spacing:-0.4px;color:#BCBEC4;-webkit-text-stroke:0.25px #BCBEC4;">23</div>
<div class="t" style="left:659.5px;top:170px;font:14px/14px 'Liberation Mono',monospace;letter-spacing:-0.4px;color:#BCBEC4;-webkit-text-stroke:0.25px #BCBEC4;">2024-07-07 13:23:24</div>
<div style="left:22px;top:187px;width:833px;height:1px;background:#2E3033;"></div>
<div style="left:54px;top:188px;width:1px;height:22px;background:#2E3033;"></div>
<div style="left:258px;top:188px;width:1px;height:22px;background:#2E3033;"></div>
<div style="left:519px;top:188px;width:1px;height:22px;background:#2E3033;"></div>
<div style="left:655px;top:188px;width:1px;height:22px;background:#2E3033;"></div>
<div style="left:854px;top:188px;width:1px;height:22px;background:#2E3033;"></div>
<div class="t" style="left:33.00px;top:193px;font:14px/14px 'Liberation Mono',monospace;letter-spacing:-0.4px;color:#5F6268;-webkit-text-stroke:0.25px #5F6268;">2</div>
<div class="t" style="left:247.00px;top:193px;font:14px/14px 'Liberation Mono',monospace;letter-spacing:-0.4px;color:#BCBEC4;-webkit-text-stroke:0.25px #BCBEC4;">2</div>
<div class="t" style="left:474.00px;top:193px;font:14px/14px 'Liberation Mono',monospace;letter-spacing:-0.4px;color:#BCBEC4;-webkit-text-stroke:0.25px #BCBEC4;">10022</div>
<div class="t" style="left:642.00px;top:193px;font:14px/14px 'Liberation Mono',monospace;letter-spacing:-0.4px;color:#BCBEC4;-webkit-text-stroke:0.25px #BCBEC4;">3</div>
<div class="t" style="left:659.5px;top:193px;font:14px/14px 'Liberation Mono',monospace;letter-spacing:-0.4px;color:#BCBEC4;-webkit-text-stroke:0.25px #BCBEC4;">2024-07-07 13:23:24</div>
<div style="left:22px;top:210px;width:833px;height:1px;background:#2E3033;"></div>
<div style="left:54px;top:211px;width:1px;height:22px;background:#2E3033;"></div>
<div style="left:258px;top:211px;width:1px;height:22px;background:#2E3033;"></div>
<div style="left:519px;top:211px;width:1px;height:22px;background:#2E3033;"></div>
<div style="left:655px;top:211px;width:1px;height:22px;background:#2E3033;"></div>
<div style="left:854px;top:211px;width:1px;height:22px;background:#2E3033;"></div>
<div class="t" style="left:33.00px;top:216px;font:14px/14px 'Liberation Mono',monospace;letter-spacing:-0.4px;color:#5F6268;-webkit-text-stroke:0.25px #5F6268;">3</div>
<div class="t" style="left:247.00px;top:216px;font:14px/14px 'Liberation Mono',monospace;letter-spacing:-0.4px;color:#BCBEC4;-webkit-text-stroke:0.25px #BCBEC4;">3</div>
<div class="t" style="left:474.00px;top:216px;font:14px/14px 'Liberation Mono',monospace;letter-spacing:-0.4px;color:#BCBEC4;-webkit-text-stroke:0.25px #BCBEC4;">10033</div>
<div class="t" style="left:626.00px;top:216px;font:14px/14px 'Liberation Mono',monospace;letter-spacing:-0.4px;color:#BCBEC4;-webkit-text-stroke:0.25px #BCBEC4;">230</div>
<div class="t" style="left:659.5px;top:216px;font:14px/14px 'Liberation Mono',monospace;letter-spacing:-0.4px;color:#BCBEC4;-webkit-text-stroke:0.25px #BCBEC4;">2024-07-07 13:23:24</div>
<div style="left:22px;top:233px;width:833px;height:1px;background:#2E3033;"></div>
<div style="left:54px;top:234px;width:1px;height:22px;background:#2E3033;"></div>
<div style="left:258px;top:234px;width:1px;height:22px;background:#2E3033;"></div>
<div style="left:519px;top:234px;width:1px;height:22px;background:#2E3033;"></div>
<div style="left:655px;top:234px;width:1px;height:22px;background:#2E3033;"></div>
<div style="left:854px;top:234px;width:1px;height:22px;background:#2E3033;"></div>
<div class="t" style="left:33.00px;top:239px;font:14px/14px 'Liberation Mono',monospace;letter-spacing:-0.4px;color:#5F6268;-webkit-text-stroke:0.25px #5F6268;">4</div>
<div class="t" style="left:247.00px;top:239px;font:14px/14px 'Liberation Mono',monospace;letter-spacing:-0.4px;color:#BCBEC4;-webkit-text-stroke:0.25px #BCBEC4;">4</div>
<div class="t" style="left:474.00px;top:239px;font:14px/14px 'Liberation Mono',monospace;letter-spacing:-0.4px;color:#BCBEC4;-webkit-text-stroke:0.25px #BCBEC4;">10444</div>
<div class="t" style="left:634.00px;top:239px;font:14px/14px 'Liberation Mono',monospace;letter-spacing:-0.4px;color:#BCBEC4;-webkit-text-stroke:0.25px #BCBEC4;">43</div>
<div class="t" style="left:659.5px;top:239px;font:14px/14px 'Liberation Mono',monospace;letter-spacing:-0.4px;color:#BCBEC4;-webkit-text-stroke:0.25px #BCBEC4;">2024-07-07 13:23:24</div>
<div style="left:22px;top:256px;width:833px;height:1px;background:#2E3033;"></div>
<div style="left:54px;top:257px;width:1px;height:22px;background:#2E3033;"></div>
<div style="left:258px;top:257px;width:1px;height:22px;background:#2E3033;"></div>
<div style="left:519px;top:257px;width:1px;height:22px;background:#2E3033;"></div>
<div style="left:655px;top:257px;width:1px;height:22px;background:#2E3033;"></div>
<div style="left:854px;top:257px;width:1px;height:22px;background:#2E3033;"></div>
<div class="t" style="left:33.00px;top:262px;font:14px/14px 'Liberation Mono',monospace;letter-spacing:-0.4px;color:#5F6268;-webkit-text-stroke:0.25px #5F6268;">5</div>
<div class="t" style="left:247.00px;top:262px;font:14px/14px 'Liberation Mono',monospace;letter-spacing:-0.4px;color:#BCBEC4;-webkit-text-stroke:0.25px #BCBEC4;">5</div>
<div class="t" style="left:474.00px;top:262px;font:14px/14px 'Liberation Mono',monospace;letter-spacing:-0.4px;color:#BCBEC4;-webkit-text-stroke:0.25px #BCBEC4;">15555</div>
<div class="t" style="left:634.00px;top:262px;font:14px/14px 'Liberation Mono',monospace;letter-spacing:-0.4px;color:#BCBEC4;-webkit-text-stroke:0.25px #BCBEC4;">60</div>
<div class="t" style="left:659.5px;top:262px;font:14px/14px 'Liberation Mono',monospace;letter-spacing:-0.4px;color:#BCBEC4;-webkit-text-stroke:0.25px #BCBEC4;">2024-07-07 13:23:24</div>
<div style="left:22px;top:279px;width:833px;height:1px;background:#2E3033;"></div>
<div style="left:54px;top:280px;width:1px;height:22px;background:#2E3033;"></div>
<div style="left:258px;top:280px;width:1px;height:22px;background:#2E3033;"></div>
<div style="left:519px;top:280px;width:1px;height:22px;background:#2E3033;"></div>
<div style="left:655px;top:280px;width:1px;height:22px;background:#2E3033;"></div>
<div style="left:854px;top:280px;width:1px;height:22px;background:#2E3033;"></div>
<div class="t" style="left:33.00px;top:285px;font:14px/14px 'Liberation Mono',monospace;letter-spacing:-0.4px;color:#5F6268;-webkit-text-stroke:0.25px #5F6268;">6</div>
<div class="t" style="left:247.00px;top:285px;font:14px/14px 'Liberation Mono',monospace;letter-spacing:-0.4px;color:#BCBEC4;-webkit-text-stroke:0.25px #BCBEC4;">6</div>
<div class="t" style="left:474.00px;top:285px;font:14px/14px 'Liberation Mono',monospace;letter-spacing:-0.4px;color:#BCBEC4;-webkit-text-stroke:0.25px #BCBEC4;">12346</div>
<div class="t" style="left:626.00px;top:285px;font:14px/14px 'Liberation Mono',monospace;letter-spacing:-0.4px;color:#BCBEC4;-webkit-text-stroke:0.25px #BCBEC4;">100</div>
<div class="t" style="left:659.5px;top:285px;font:14px/14px 'Liberation Mono',monospace;letter-spacing:-0.4px;color:#BCBEC4;-webkit-text-stroke:0.25px #BCBEC4;">2024-07-07 13:23:24</div>
<div style="left:22px;top:302px;width:833px;height:1px;background:#2E3033;"></div>
<div style="left:54px;top:303px;width:1px;height:22px;background:#2E3033;"></div>
<div style="left:258px;top:303px;width:1px;height:22px;background:#2E3033;"></div>
<div style="left:519px;top:303px;width:1px;height:22px;background:#2E3033;"></div>
<div style="left:655px;top:303px;width:1px;height:22px;background:#2E3033;"></div>
<div style="left:854px;top:303px;width:1px;height:22px;background:#2E3033;"></div>
<div class="t" style="left:33.00px;top:308px;font:14px/14px 'Liberation Mono',monospace;letter-spacing:-0.4px;color:#5F6268;-webkit-text-stroke:0.25px #5F6268;">7</div>
<div class="t" style="left:247.00px;top:308px;font:14px/14px 'Liberation Mono',monospace;letter-spacing:-0.4px;color:#BCBEC4;-webkit-text-stroke:0.25px #BCBEC4;">7</div>
<div class="t" style="left:474.00px;top:308px;font:14px/14px 'Liberation Mono',monospace;letter-spacing:-0.4px;color:#BCBEC4;-webkit-text-stroke:0.25px #BCBEC4;">10127</div>
<div class="t" style="left:626.00px;top:308px;font:14px/14px 'Liberation Mono',monospace;letter-spacing:-0.4px;color:#BCBEC4;-webkit-text-stroke:0.25px #BCBEC4;">123</div>
<div class="t" style="left:659.5px;top:308px;font:14px/14px 'Liberation Mono',monospace;letter-spacing:-0.4px;color:#BCBEC4;-webkit-text-stroke:0.25px #BCBEC4;">2024-07-07 13:23:24</div>
<div style="left:22px;top:325px;width:833px;height:1px;background:#2E3033;"></div>
<div style="left:54px;top:326px;width:1px;height:22px;background:#2E3033;"></div>
<div style="left:258px;top:326px;width:1px;height:22px;background:#2E3033;"></div>
<div style="left:519px;top:326px;width:1px;height:22px;background:#2E3033;"></div>
<div style="left:655px;top:326px;width:1px;height:22px;background:#2E3033;"></div>
<div style="left:854px;top:326px;width:1px;height:22px;background:#2E3033;"></div>
<div class="t" style="left:33.00px;top:331px;font:14px/14px 'Liberation Mono',monospace;letter-spacing:-0.4px;color:#5F6268;-webkit-text-stroke:0.25px #5F6268;">8</div>
<div class="t" style="left:247.00px;top:331px;font:14px/14px 'Liberation Mono',monospace;letter-spacing:-0.4px;color:#BCBEC4;-webkit-text-stroke:0.25px #BCBEC4;">8</div>
<div class="t" style="left:474.00px;top:331px;font:14px/14px 'Liberation Mono',monospace;letter-spacing:-0.4px;color:#BCBEC4;-webkit-text-stroke:0.25px #BCBEC4;">10521</div>
<div class="t" style="left:618.00px;top:331px;font:14px/14px 'Liberation Mono',monospace;letter-spacing:-0.4px;color:#BCBEC4;-webkit-text-stroke:0.25px #BCBEC4;">3214</div>
<div class="t" style="left:659.5px;top:331px;font:14px/14px 'Liberation Mono',monospace;letter-spacing:-0.4px;color:#BCBEC4;-webkit-text-stroke:0.25px #BCBEC4;">2024-07-07 13:23:24</div>
<div style="left:22px;top:348px;width:833px;height:1px;background:#2E3033;"></div>
<div style="left:54px;top:349px;width:1px;height:22px;background:#2E3033;"></div>
<div style="left:258px;top:349px;width:1px;height:22px;background:#2E3033;"></div>
<div style="left:519px;top:349px;width:1px;height:22px;background:#2E3033;"></div>
<div style="left:655px;top:349px;width:1px;height:22px;background:#2E3033;"></div>
<div style="left:854px;top:349px;width:1px;height:22px;background:#2E3033;"></div>
<div class="t" style="left:33.00px;top:354px;font:14px/14px 'Liberation Mono',monospace;letter-spacing:-0.4px;color:#5F6268;-webkit-text-stroke:0.25px #5F6268;">9</div>
<div class="t" style="left:247.00px;top:354px;font:14px/14px 'Liberation Mono',monospace;letter-spacing:-0.4px;color:#BCBEC4;-webkit-text-stroke:0.25px #BCBEC4;">9</div>
<div class="t" style="left:474.00px;top:354px;font:14px/14px 'Liberation Mono',monospace;letter-spacing:-0.4px;color:#BCBEC4;-webkit-text-stroke:0.25px #BCBEC4;">18001</div>
<div class="t" style="left:642.00px;top:354px;font:14px/14px 'Liberation Mono',monospace;letter-spacing:-0.4px;color:#BCBEC4;-webkit-text-stroke:0.25px #BCBEC4;">9</div>
<div class="t" style="left:659.5px;top:354px;font:14px/14px 'Liberation Mono',monospace;letter-spacing:-0.4px;color:#BCBEC4;-webkit-text-stroke:0.25px #BCBEC4;">2024-07-07 13:23:24</div>
<div style="left:22px;top:371px;width:833px;height:1px;background:#2E3033;"></div>
<div style="left:54px;top:372px;width:1px;height:22px;background:#2E3033;"></div>
<div style="left:258px;top:372px;width:1px;height:22px;background:#2E3033;"></div>
<div style="left:519px;top:372px;width:1px;height:22px;background:#2E3033;"></div>
<div style="left:655px;top:372px;width:1px;height:22px;background:#2E3033;"></div>
<div style="left:854px;top:372px;width:1px;height:22px;background:#2E3033;"></div>
<div class="t" style="left:30.00px;top:377px;font:14px/14px 'Liberation Mono',monospace;letter-spacing:-0.4px;color:#5F6268;-webkit-text-stroke:0.25px #5F6268;">10</div>
<div class="t" style="left:239.00px;top:377px;font:14px/14px 'Liberation Mono',monospace;letter-spacing:-0.4px;color:#BCBEC4;-webkit-text-stroke:0.25px #BCBEC4;">10</div>
<div class="t" style="left:474.00px;top:377px;font:14px/14px 'Liberation Mono',monospace;letter-spacing:-0.4px;color:#BCBEC4;-webkit-text-stroke:0.25px #BCBEC4;">18501</div>
<div class="t" style="left:634.00px;top:377px;font:14px/14px 'Liberation Mono',monospace;letter-spacing:-0.4px;color:#BCBEC4;-webkit-text-stroke:0.25px #BCBEC4;">78</div>
<div class="t" style="left:659.5px;top:377px;font:14px/14px 'Liberation Mono',monospace;letter-spacing:-0.4px;color:#BCBEC4;-webkit-text-stroke:0.25px #BCBEC4;">2024-07-07 13:23:24</div>
<div style="left:22px;top:394px;width:833px;height:1px;background:#2E3033;"></div>
<div class="t" style="left:2191.6px;top:65px;font:12px/12px 'Liberation Sans',sans-serif;color:#DFE1E5;letter-spacing:-0.150px;transform:scaleX(0.9382);transform-origin:0px 0;-webkit-text-stroke:0.2px #DFE1E5;">Database</div>
<svg style="left:2405.5px;top:62.5px;" width="15" height="15" viewBox="0 0 15 15"><circle cx="7.5" cy="7.5" r="6.3" fill="none" stroke="#BEC0C4" stroke-width="1.5"/><path d="M7.5 1V5.3M7.5 9.7V14M1 7.5H5.3M9.7 7.5H14" stroke="#BEC0C4" stroke-width="1.9"/></svg>
<svg style="left:2432.7px;top:62.9px;" width="13" height="15" viewBox="0 0 13 15"><rect x="0" y="0" width="12.6" height="2.2" fill="#BEC0C4"/><rect x="0" y="12" width="12.6" height="2.2" fill="#BEC0C4"/><path d="M3.2 6.3L6.3 3.3L9.4 6.3ZM3.2 8L6.3 11L9.4 8Z" fill="#BEC0C4"/></svg>
<svg style="left:2458.8px;top:63px;" width="13" height="15" viewBox="0 0 13 15"><rect x="0" y="6" width="12.6" height="2.3" fill="#BEC0C4"/><path d="M3 1H9.6L6.3 4.3ZM3 13.3H9.6L6.3 10Z" fill="#BEC0C4"/></svg>
<div style="left:2481px;top:60px;width:1px;height:20px;background:#43454A;"></div>
<svg style="left:2491.3px;top:63.5px;" width="13" height="13" viewBox="0 0 13 13"><g transform="scale(1.0)"><path d="M4.44 2.28L5.04 0.17L7.96 0.17L8.56 2.28L9.13 2.60L11.25 2.07L12.72 4.60L11.19 6.17L11.19 6.83L12.72 8.40L11.25 10.93L9.13 10.40L8.56 10.72L7.96 12.83L5.04 12.83L4.44 10.72L3.87 10.40L1.75 10.93L0.28 8.40L1.81 6.83L1.81 6.17L0.28 4.60L1.75 2.07L3.87 2.60Z" fill="#BEC0C4"/><circle cx="6.5" cy="6.5" r="2.4" fill="#2B2D30"/></g></svg>
<div style="left:2518px;top:69px;width:12px;height:2px;background:#BEC0C4;"></div>
<svg style="left:2195px;top:93px;" width="17" height="15" viewBox="0 0 17 15"><rect x="4.5" y="0" width="2" height="11" fill="#BEC0C4"/><rect x="0" y="4.5" width="11" height="2" fill="#BEC0C4"/><path d="M10 11.5H16L13 14.5Z" fill="#BEC0C4"/></svg>
<svg style="left:2217px;top:91px;" width="17" height="15" viewBox="0 0 17 15"><ellipse cx="7" cy="2" rx="6" ry="2" fill="#BBBDC1"/><path d="M1 4Q7 7 13 4V6Q7 9 1 6ZM1 8Q7 11 10 8V10Q7 13 1 10Z" fill="#BBBDC1"/><path d="M8 14L14 8M14 8A2.5 2.5 0 1 1 16 5.5" stroke="#BBBDC1" stroke-width="2" fill="none"/></svg>
<div style="left:2243px;top:88px;width:1px;height:20px;background:#43454A;"></div>
<svg style="left:2253px;top:92px;" width="13" height="13" viewBox="0 0 13 13"><path d="M1.6 6.5A4.9 4.9 0 0 1 10.2 3.3M11.4 6.5A4.9 4.9 0 0 1 2.8 9.7" fill="none" stroke="#BEC0C4" stroke-width="1.7"/><path d="M8 0.6L11.6 1V4.8ZM5 12.4L1.4 12V8.2Z" fill="#BEC0C4"/></svg>
<svg style="left:2279px;top:91px;" width="15" height="16" viewBox="0 0 15 16"><ellipse cx="6.5" cy="2" rx="6" ry="2" fill="#BBBDC1"/><path d="M0.5 4Q6.5 7 12.5 4V6Q6.5 9 0.5 6ZM0.5 8Q6.5 11 12.5 8V10Q6.5 13 0.5 10ZM0.5 12Q6.5 15 9 13V14Q6.5 16 0.5 14Z" fill="#BBBDC1"/><rect x="9" y="10" width="6" height="6" fill="#DB5C5C"/></svg>
<div style="left:2301px;top:88px;width:1px;height:20px;background:#43454A;"></div>
<svg style="left:2311px;top:92px;" width="15" height="13" viewBox="0 0 15 13"><rect x="0.5" y="0.5" width="14" height="12" fill="none" stroke="#BBBDC1"/><rect x="0" y="0" width="15" height="2" fill="#BBBDC1"/><text x="2.5" y="10.5" font-family="Liberation Sans" font-size="7" font-weight="bold" fill="#BBBDC1">QL</text></svg>
<svg style="left:2337px;top:92px;" width="14" height="12" viewBox="0 0 14 12"><rect x="0" y="0" width="14" height="12" fill="#A8ADBD"/><rect x="1" y="3" width="3" height="2" fill="#1A1B1E"/><rect x="5" y="3" width="4" height="2" fill="#1A1B1E"/><rect x="10" y="3" width="3" height="2" fill="#1A1B1E"/><rect x="1" y="6" width="3" height="2" fill="#1A1B1E"/><rect x="5" y="6" width="4" height="2" fill="#1A1B1E"/><rect x="10" y="6" width="3" height="2" fill="#1A1B1E"/><rect x="1" y="9" width="3" height="2" fill="#1A1B1E"/><rect x="5" y="9" width="4" height="2" fill="#1A1B1E"/><rect x="10" y="9" width="3" height="2" fill="#1A1B1E"/></svg>
<div class="t" style="left:2363.3px;top:93px;font:12px/12px 'Liberation Sans',sans-serif;color:#DFE1E5;letter-spacing:-0.150px;transform:scaleX(0.8776);transform-origin:0px 0;-webkit-text-stroke:0.2px #DFE1E5;">DDL</div>
<svg style="left:2396px;top:91px;" width="17" height="17" viewBox="0 0 17 17"><path d="M6.1 4L9.7 0V8.1Z" fill="#3BA1DA"/><rect x="9.2" y="3.2" width="4.9" height="1.7" fill="#3BA1DA"/><path d="M8 9.9L4.5 6.1V14Z" fill="#3BA1DA"/><rect x="0" y="9.1" width="5" height="1.7" fill="#3BA1DA"/></svg>
<div style="left:2419px;top:88px;width:1px;height:20px;background:#43454A;"></div>
<svg style="left:2429px;top:93px;" width="17" height="15" viewBox="0 0 17 15"><path d="M0 5.2Q7.1 -5.2 14.2 5.2Q7.1 15.6 0 5.2Z" fill="#BEC0C4"/><circle cx="7.1" cy="5.2" r="3.7" fill="#2B2D30"/><circle cx="7.1" cy="5.2" r="2.6" fill="#BEC0C4"/><path d="M10.5 11.2H16.5L13.5 14.2Z" fill="#BEC0C4"/></svg>
<div style="left:2185px;top:237px;width:352px;height:24px;background:#43454A;"></div>
<div style="left:2185px;top:113px;width:352px;height:742px;overflow:hidden">
<div style="position:absolute;left:-2185px;top:-113px;width:2560px;height:1400px">
<div style="left:2185px;top:237px;width:352px;height:24px;background:#43454A;"></div>
<svg style="left:2200px;top:127px;" width="10" height="6" viewBox="0 0 10 6"><path d="M1 0.8 L5 4.8 L9 0.8" fill="none" stroke="#B4B8BF" stroke-width="1.1"/></svg>
<svg style="left:2214px;top:120px;" width="21" height="18" viewBox="0 0 21 18"><path d="M4 13 L7.5 10 Q11 8 13.8 6.6 L15.6 4.2 L18.7 4.2 L16.6 5.6 L15.7 12.4 L13.8 11.2 L11.6 13.4 L10.5 12 Q7 11.8 4 13 Z" fill="none" stroke="#BFC1C6" stroke-width="1" stroke-linejoin="round"/><circle cx="18" cy="15.1" r="2" fill="#1FD11F"/></svg>
<div class="t" style="left:2240.3px;top:124px;font:12px/12px 'Liberation Sans',sans-serif;color:#DFE1E5;letter-spacing:0.367px;-webkit-text-stroke:0.2px #DFE1E5;">phpMyAdmin</div>
<div style="left:2321px;top:119px;width:34px;height:21px;background:transparent;border:1px solid #43454A;border-radius:4px;box-sizing:border-box"></div>
<div class="t" style="left:2323.2px;top:124px;font:12px/12px 'Liberation Sans',sans-serif;color:#6F737A;letter-spacing:-0.150px;transform:scaleX(0.9744);transform-origin:0px 0;-webkit-text-stroke:0.2px #6F737A;">2 of 6</div>
<svg style="left:2219px;top:151px;" width="10" height="6" viewBox="0 0 10 6"><path d="M1 0.8 L5 4.8 L9 0.8" fill="none" stroke="#B4B8BF" stroke-width="1.1"/></svg>
<svg style="left:2238px;top:147px;" width="15" height="14" viewBox="0 0 15 14"><path d="M3.5 6.5V2.5H9" fill="none" stroke="#A9AEB5" stroke-width="1"/><path d="M7 10.5H9" stroke="#A9AEB5" stroke-width="1"/><rect x="9" y="0" width="5" height="5" fill="#3A8AAB"/><rect x="0" y="6" width="7" height="8" fill="#3A8AAB"/><rect x="9" y="8" width="5" height="5.5" fill="#3A8AAB"/></svg>
<div class="t" style="left:2259.7px;top:148px;font:12px/12px 'Liberation Sans',sans-serif;color:#DFE1E5;letter-spacing:-0.150px;transform:scaleX(0.9861);transform-origin:0px 0;-webkit-text-stroke:0.2px #DFE1E5;">baza_podatkov</div>
<svg style="left:2238px;top:175px;" width="10" height="6" viewBox="0 0 10 6"><path d="M1 0.8 L5 4.8 L9 0.8" fill="none" stroke="#B4B8BF" stroke-width="1.1"/></svg>
<svg style="left:2257px;top:171px;" width="15" height="12" viewBox="0 0 15 12"><path d="M0 0H5.5L7 1.8H14.5V11.2H0Z" fill="#3A8AAB"/></svg>
<div class="t" style="left:2278.2px;top:172px;font:12px/12px 'Liberation Sans',sans-serif;color:#DFE1E5;letter-spacing:-0.150px;transform:scaleX(0.9856);transform-origin:0px 0;-webkit-text-stroke:0.2px #DFE1E5;">tables</div>
<div class="t" style="left:2314.8px;top:172px;font:12px/12px 'Liberation Sans',sans-serif;color:#6F737A;letter-spacing:0.000px;-webkit-text-stroke:0.2px #6F737A;">2</div>
<svg style="left:2257px;top:199px;" width="10" height="6" viewBox="0 0 10 6"><path d="M1 0.8 L5 4.8 L9 0.8" fill="none" stroke="#B4B8BF" stroke-width="1.1"/></svg>
<svg style="left:2276px;top:195px;" width="14" height="12" viewBox="0 0 14 12"><rect x="0" y="0" width="14" height="12" fill="#A9AEB5"/><rect x="1" y="3" width="3" height="2" fill="#1A1B1E"/><rect x="5" y="3" width="4" height="2" fill="#1A1B1E"/><rect x="10" y="3" width="3" height="2" fill="#1A1B1E"/><rect x="1" y="6" width="3" height="2" fill="#1A1B1E"/><rect x="5" y="6" width="4" height="2" fill="#1A1B1E"/><rect x="10" y="6" width="3" height="2" fill="#1A1B1E"/><rect x="1" y="9" width="3" height="2" fill="#1A1B1E"/><rect x="5" y="9" width="4" height="2" fill="#1A1B1E"/><rect x="10" y="9" width="3" height="2" fill="#1A1B1E"/></svg>
<div class="t" style="left:2297.2px;top:196px;font:12px/12px 'Liberation Sans',sans-serif;color:#DFE1E5;letter-spacing:0.188px;-webkit-text-stroke:0.2px #DFE1E5;">numericno</div>
<svg style="left:2276px;top:223px;" width="10" height="6" viewBox="0 0 10 6"><path d="M1 0.8 L5 4.8 L9 0.8" fill="none" stroke="#B4B8BF" stroke-width="1.1"/></svg>
<svg style="left:2295px;top:219px;" width="15" height="12" viewBox="0 0 15 12"><path d="M0 0H5.5L7 1.8H14.5V11.2H0Z" fill="#3A8AAB"/></svg>
<div class="t" style="left:2316.2px;top:220px;font:12px/12px 'Liberation Sans',sans-serif;color:#DFE1E5;letter-spacing:0.133px;-webkit-text-stroke:0.2px #DFE1E5;">columns</div>
<div class="t" style="left:2368px;top:220px;font:12px/12px 'Liberation Sans',sans-serif;color:#6F737A;letter-spacing:0.000px;-webkit-text-stroke:0.2px #6F737A;">4</div>
<svg style="left:2312px;top:243px;" width="18" height="15" viewBox="0 0 18 15"><g transform="translate(2,0)"><rect x="0" y="0" width="5" height="9" fill="#4A9FC6"/><circle cx="1.8" cy="11.2" r="2.6" fill="#A9AEB5"/><rect x="6" y="0" width="8" height="2" fill="#A9AEB5"/><rect x="6" y="5" width="3" height="1.5" fill="#A9AEB5"/><rect x="6" y="8" width="3" height="1.5" fill="#A9AEB5"/><rect x="6" y="11" width="3" height="1.5" fill="#A9AEB5"/><circle cx="11.7" cy="6" r="2.4" fill="none" stroke="#F0AE3C" stroke-width="1.9"/><rect x="10.7" y="8" width="2" height="6" fill="#F0AE3C"/><rect x="12.5" y="10.5" width="2" height="1.6" fill="#F0AE3C"/><rect x="12.5" y="12.6" width="1.6" height="1.4" fill="#F0AE3C"/></g></svg>
<div class="t" style="left:2335.1px;top:244px;font:12px/12px 'Liberation Sans',sans-serif;color:#DFE1E5;letter-spacing:-0.140px;-webkit-text-stroke:0.2px #DFE1E5;">id_narocila</div>
<div class="t" style="left:2401.3px;top:244px;font:12px/12px 'Liberation Sans',sans-serif;color:#6F737A;letter-spacing:-0.126px;-webkit-text-stroke:0.2px #6F737A;">int (auto increment)</div>
<svg style="left:2314px;top:267px;" width="14" height="12" viewBox="0 0 14 12"><rect x="0" y="0" width="5" height="12" fill="#8E9399"/><rect x="6" y="0" width="8" height="12" fill="#A9AEB5"/><rect x="6" y="3" width="3" height="2" fill="#1A1B1E"/><rect x="10" y="3" width="3" height="2" fill="#1A1B1E"/><rect x="6" y="6" width="3" height="2" fill="#1A1B1E"/><rect x="10" y="6" width="3" height="2" fill="#1A1B1E"/><rect x="6" y="9" width="3" height="2" fill="#1A1B1E"/><rect x="10" y="9" width="3" height="2" fill="#1A1B1E"/></svg>
<div class="t" style="left:2334.9px;top:268px;font:12px/12px 'Liberation Sans',sans-serif;color:#DFE1E5;letter-spacing:-0.150px;transform:scaleX(0.9908);transform-origin:0px 0;-webkit-text-stroke:0.2px #DFE1E5;">stevilka_narocila</div>
<div class="t" style="left:2430.3px;top:268px;font:12px/12px 'Liberation Sans',sans-serif;color:#6F737A;letter-spacing:0.100px;-webkit-text-stroke:0.2px #6F737A;">int</div>
<svg style="left:2314px;top:291px;" width="14" height="12" viewBox="0 0 14 12"><rect x="0" y="0" width="5" height="12" fill="#8E9399"/><rect x="6" y="0" width="8" height="12" fill="#A9AEB5"/><rect x="6" y="3" width="3" height="2" fill="#1A1B1E"/><rect x="10" y="3" width="3" height="2" fill="#1A1B1E"/><rect x="6" y="6" width="3" height="2" fill="#1A1B1E"/><rect x="10" y="6" width="3" height="2" fill="#1A1B1E"/><rect x="6" y="9" width="3" height="2" fill="#1A1B1E"/><rect x="10" y="9" width="3" height="2" fill="#1A1B1E"/></svg>
<div class="t" style="left:2334.9px;top:292px;font:12px/12px 'Liberation Sans',sans-serif;color:#DFE1E5;letter-spacing:0.033px;-webkit-text-stroke:0.2px #DFE1E5;">kosi</div>
<div class="t" style="left:2365.5px;top:292px;font:12px/12px 'Liberation Sans',sans-serif;color:#6F737A;letter-spacing:0.100px;-webkit-text-stroke:0.2px #6F737A;">int</div>
<svg style="left:2313px;top:315px;" width="16" height="14" viewBox="0 0 16 14"><g transform="translate(2,0)"><rect x="0" y="0" width="5" height="9" fill="#8E9399"/><circle cx="1.8" cy="11" r="2.6" fill="#A9AEB5"/><rect x="6" y="0" width="8" height="12" fill="#A9AEB5"/><rect x="6" y="3" width="3" height="2" fill="#1A1B1E"/><rect x="10" y="3" width="3" height="2" fill="#1A1B1E"/><rect x="6" y="6" width="3" height="2" fill="#1A1B1E"/><rect x="10" y="6" width="3" height="2" fill="#1A1B1E"/><rect x="6" y="9" width="3" height="2" fill="#1A1B1E"/><rect x="10" y="9" width="3" height="2" fill="#1A1B1E"/></g></svg>
<div class="t" style="left:2335.5px;top:316px;font:12px/12px 'Liberation Sans',sans-serif;color:#DFE1E5;letter-spacing:0.300px;-webkit-text-stroke:0.2px #DFE1E5;">datum</div>
<div class="t" style="left:2378.8px;top:316px;font:12px/12px 'Liberation Sans',sans-serif;color:#6F737A;letter-spacing:-0.150px;transform:scaleX(0.9830);transform-origin:0px 0;-webkit-text-stroke:0.2px #6F737A;">timestamp = current_timestamp</div>
<svg style="left:2276px;top:343px;" width="10" height="6" viewBox="0 0 10 6"><path d="M1 0.8 L5 4.8 L9 0.8" fill="none" stroke="#B4B8BF" stroke-width="1.1"/></svg>
<svg style="left:2295px;top:339px;" width="15" height="12" viewBox="0 0 15 12"><path d="M0 0H5.5L7 1.8H14.5V11.2H0Z" fill="#3A8AAB"/></svg>
<div class="t" style="left:2316.6px;top:340px;font:12px/12px 'Liberation Sans',sans-serif;color:#DFE1E5;letter-spacing:-0.150px;transform:scaleX(0.9084);transform-origin:0px 0;-webkit-text-stroke:0.2px #DFE1E5;">keys</div>
<div class="t" style="left:2345.7px;top:340px;font:12px/12px 'Liberation Sans',sans-serif;color:#6F737A;letter-spacing:0.000px;-webkit-text-stroke:0.2px #6F737A;">1</div>
<svg style="left:2316px;top:362px;" width="10" height="15" viewBox="0 0 10 15"><circle cx="5" cy="4" r="3.2" fill="none" stroke="#E5A936" stroke-width="2"/><path d="M5 7V14M5 10.5H8M5 13H7.5" stroke="#E5A936" stroke-width="2"/></svg>
<div class="t" style="left:2334.9px;top:364px;font:12px/12px 'Liberation Sans',sans-serif;color:#DFE1E5;letter-spacing:-0.150px;transform:scaleX(0.9360);transform-origin:0px 0;-webkit-text-stroke:0.2px #DFE1E5;">PRIMARY</div>
<div class="t" style="left:2394.3px;top:364px;font:12px/12px 'Liberation Sans',sans-serif;color:#6F737A;letter-spacing:-0.150px;transform:scaleX(0.9611);transform-origin:0px 0;-webkit-text-stroke:0.2px #6F737A;">(id_narocila)</div>
<svg style="left:2276px;top:391px;" width="10" height="6" viewBox="0 0 10 6"><path d="M1 0.8 L5 4.8 L9 0.8" fill="none" stroke="#B4B8BF" stroke-width="1.1"/></svg>
<svg style="left:2295px;top:387px;" width="15" height="12" viewBox="0 0 15 12"><path d="M0 0H5.5L7 1.8H14.5V11.2H0Z" fill="#3A8AAB"/></svg>
<div class="t" style="left:2316px;top:388px;font:12px/12px 'Liberation Sans',sans-serif;color:#DFE1E5;letter-spacing:-0.150px;transform:scaleX(0.9975);transform-origin:0px 0;-webkit-text-stroke:0.2px #DFE1E5;">indexes</div>
<div class="t" style="left:2362.9px;top:388px;font:12px/12px 'Liberation Sans',sans-serif;color:#6F737A;letter-spacing:0.000px;-webkit-text-stroke:0.2px #6F737A;">1</div>
<svg style="left:2316px;top:410px;" width="14" height="15" viewBox="0 0 14 15"><circle cx="4" cy="1.5" r="1.3" fill="#3D9DC4"/><path d="M4 4V11Q4 13 1.5 12.5" fill="none" stroke="#3D9DC4" stroke-width="1.8"/><path d="M7 8V12Q7 14 9.5 14Q12 14 12 12V8" fill="none" stroke="#A8ADBD" stroke-width="1.3"/></svg>
<div class="t" style="left:2334.9px;top:412px;font:12px/12px 'Liberation Sans',sans-serif;color:#DFE1E5;letter-spacing:-0.150px;transform:scaleX(0.9360);transform-origin:0px 0;-webkit-text-stroke:0.2px #DFE1E5;">PRIMARY</div>
<div class="t" style="left:2394.3px;top:412px;font:12px/12px 'Liberation Sans',sans-serif;color:#6F737A;letter-spacing:-0.150px;transform:scaleX(0.9315);transform-origin:0px 0;-webkit-text-stroke:0.2px #6F737A;">(id_narocila) UNIQUE</div>
<svg style="left:2259px;top:436px;" width="6" height="10" viewBox="0 0 6 10"><path d="M0.8 1 L4.8 5 L0.8 9" fill="none" stroke="#B4B8BF" stroke-width="1.1"/></svg>
<svg style="left:2276px;top:435px;" width="14" height="12" viewBox="0 0 14 12"><rect x="0" y="0" width="14" height="12" fill="#A9AEB5"/><rect x="1" y="3" width="3" height="2" fill="#1A1B1E"/><rect x="5" y="3" width="4" height="2" fill="#1A1B1E"/><rect x="10" y="3" width="3" height="2" fill="#1A1B1E"/><rect x="1" y="6" width="3" height="2" fill="#1A1B1E"/><rect x="5" y="6" width="4" height="2" fill="#1A1B1E"/><rect x="10" y="6" width="3" height="2" fill="#1A1B1E"/><rect x="1" y="9" width="3" height="2" fill="#1A1B1E"/><rect x="5" y="9" width="4" height="2" fill="#1A1B1E"/><rect x="10" y="9" width="3" height="2" fill="#1A1B1E"/></svg>
<div class="t" style="left:2297.2px;top:436px;font:12px/12px 'Liberation Sans',sans-serif;color:#DFE1E5;letter-spacing:-0.150px;transform:scaleX(0.9506);transform-origin:0px 0;-webkit-text-stroke:0.2px #DFE1E5;">osebe</div>
<svg style="left:2221px;top:460px;" width="6" height="10" viewBox="0 0 6 10"><path d="M0.8 1 L4.8 5 L0.8 9" fill="none" stroke="#B4B8BF" stroke-width="1.1"/></svg>
<svg style="left:2238px;top:459px;" width="15" height="14" viewBox="0 0 15 14"><path d="M3.5 6.5V2.5H9" fill="none" stroke="#A9AEB5" stroke-width="1"/><path d="M7 10.5H9" stroke="#A9AEB5" stroke-width="1"/><rect x="9" y="0" width="5" height="5" fill="#3A8AAB"/><rect x="0" y="6" width="7" height="8" fill="#3A8AAB"/><rect x="9" y="8" width="5" height="5.5" fill="#3A8AAB"/></svg>
<div class="t" style="left:2259.1px;top:460px;font:12px/12px 'Liberation Sans',sans-serif;color:#DFE1E5;letter-spacing:0.300px;-webkit-text-stroke:0.2px #DFE1E5;">phpmyadmin</div>
<svg style="left:2221px;top:484px;" width="6" height="10" viewBox="0 0 6 10"><path d="M0.8 1 L4.8 5 L0.8 9" fill="none" stroke="#B4B8BF" stroke-width="1.1"/></svg>
<svg style="left:2238px;top:483px;" width="15" height="14" viewBox="0 0 15 14"><path d="M0 0H5L6 1.5H11V6H0Z" fill="#A8ADBD"/><rect x="0" y="6" width="6" height="7" fill="#A8ADBD"/><path d="M7 7.5H8.5M7 10H8.5M7 12.5H8.5M10 7.5H15M10 10H15M10 12.5H15" stroke="#3D9DC4" stroke-width="1.4"/></svg>
<div class="t" style="left:2259.1px;top:484px;font:12px/12px 'Liberation Sans',sans-serif;color:#DFE1E5;letter-spacing:-0.150px;transform:scaleX(0.9682);transform-origin:0px 0;-webkit-text-stroke:0.2px #DFE1E5;">Server Objects</div>
</div></div>
<div class="t" style="left:28px;top:863px;font:12px/12px 'Liberation Sans',sans-serif;color:#DFE1E5;letter-spacing:-0.150px;transform:scaleX(0.9410);transform-origin:0px 0;-webkit-text-stroke:0.2px #DFE1E5;">Services</div>
<svg style="left:2457.5px;top:861px;" width="15" height="15" viewBox="0 0 15 15"><circle cx="7.5" cy="7.5" r="6.3" fill="none" stroke="#BEC0C4" stroke-width="1.5"/><path d="M7.5 1V5.3M7.5 9.7V14M1 7.5H5.3M9.7 7.5H14" stroke="#BEC0C4" stroke-width="1.9"/></svg>
<div style="left:2481px;top:858px;width:1px;height:20px;background:#43454A;"></div>
<svg style="left:2491.3px;top:861.5px;" width="13" height="13" viewBox="0 0 13 13"><g transform="scale(1.0)"><path d="M4.44 2.28L5.04 0.17L7.96 0.17L8.56 2.28L9.13 2.60L11.25 2.07L12.72 4.60L11.19 6.17L11.19 6.83L12.72 8.40L11.25 10.93L9.13 10.40L8.56 10.72L7.96 12.83L5.04 12.83L4.44 10.72L3.87 10.40L1.75 10.93L0.28 8.40L1.81 6.83L1.81 6.17L0.28 4.60L1.75 2.07L3.87 2.60Z" fill="#BEC0C4"/><circle cx="6.5" cy="6.5" r="2.4" fill="#2B2D30"/></g></svg>
<div style="left:2518px;top:867px;width:12px;height:2px;background:#BEC0C4;"></div>
<div class="t" style="left:30px;top:892px;font:12px/12px 'Liberation Sans',sans-serif;color:#BBBDC1;letter-spacing:0.000px;-webkit-text-stroke:0.2px #BBBDC1;">T</div>
<svg style="left:36px;top:893px;" width="8" height="10" viewBox="0 0 8 10"><path d="M0.5 2L5 8M5 2L0.5 8" stroke="#BBBDC1" stroke-width="1"/><path d="M3 8H8L5.5 10Z" fill="#BBBDC1"/></svg>
<div style="left:26px;top:913px;width:20px;height:1px;background:#43454A;"></div>
<div style="left:31px;top:925px;width:10px;height:10px;background:#5E6064;"></div>
<div style="left:26px;top:946px;width:20px;height:1px;background:#43454A;"></div>
<svg style="left:30px;top:958px;" width="13" height="10" viewBox="0 0 13 10"><rect x="0" y="0" width="6" height="4" fill="#BBBDC1"/><rect x="7" y="0" width="6" height="4" fill="#BBBDC1"/><rect x="0" y="6" width="13" height="4" fill="#BBBDC1"/></svg>
<svg style="left:59px;top:891px;" width="17" height="15" viewBox="0 0 17 15"><rect x="4.5" y="0" width="2" height="11" fill="#BEC0C4"/><rect x="0" y="4.5" width="11" height="2" fill="#BEC0C4"/><path d="M10 11.5H16L13 14.5Z" fill="#BEC0C4"/></svg>
<svg style="left:85px;top:890px;" width="15" height="15" viewBox="0 0 15 15"><rect x="0" y="0" width="4.5" height="4.5" fill="#BBBDC1"/><rect x="6" y="0" width="4.5" height="4.5" fill="#BBBDC1"/><rect x="0" y="6" width="4.5" height="4.5" fill="#BBBDC1"/><rect x="6" y="6" width="4.5" height="4.5" fill="#BBBDC1"/><path d="M8 12H14L11 15Z" fill="#BBBDC1"/></svg>
<svg style="left:108px;top:888px;" width="17" height="16" viewBox="0 0 17 16"><path d="M1 15V5Q1 1 5 1H11Q15 1 15 5V15" fill="none" stroke="#BBBDC1" stroke-width="1.2"/><path d="M8 4V12M4 8H12" stroke="#BBBDC1" stroke-width="1.6"/></svg>
<div style="left:132px;top:886px;width:1px;height:20px;background:#43454A;"></div>
<svg style="left:143px;top:889px;" width="13" height="15" viewBox="0 0 13 15"><rect x="0" y="0" width="12.6" height="2.2" fill="#BEC0C4"/><rect x="0" y="12" width="12.6" height="2.2" fill="#BEC0C4"/><path d="M3.2 6.3L6.3 3.3L9.4 6.3ZM3.2 8L6.3 11L9.4 8Z" fill="#BEC0C4"/></svg>
<svg style="left:169px;top:889px;" width="13" height="15" viewBox="0 0 13 15"><rect x="0" y="6" width="12.6" height="2.3" fill="#BEC0C4"/><path d="M3 1H9.6L6.3 4.3ZM3 13.3H9.6L6.3 10Z" fill="#BEC0C4"/></svg>
<div style="left:51px;top:1059px;width:751px;height:24px;background:#43454A;"></div>
<svg style="left:66px;top:925px;" width="10" height="6" viewBox="0 0 10 6"><path d="M1 0.8 L5 4.8 L9 0.8" fill="none" stroke="#B4B8BF" stroke-width="1.1"/></svg>
<svg style="left:85px;top:921px;" width="15" height="12" viewBox="0 0 15 12"><path d="M0 0H5.5L7 1.8H14.5V11.2H0Z" fill="#8E9399"/></svg>
<div class="t" style="left:103.5px;top:922px;font:12px/12px 'Liberation Sans',sans-serif;color:#DFE1E5;letter-spacing:-0.150px;transform:scaleX(0.9342);transform-origin:0px 0;-webkit-text-stroke:0.2px #DFE1E5;">Database</div>
<svg style="left:85px;top:949px;" width="10" height="6" viewBox="0 0 10 6"><path d="M1 0.8 L5 4.8 L9 0.8" fill="none" stroke="#B4B8BF" stroke-width="1.1"/></svg>
<svg style="left:100px;top:942px;" width="21" height="18" viewBox="0 0 21 18"><path d="M4 13 L7.5 10 Q11 8 13.8 6.6 L15.6 4.2 L18.7 4.2 L16.6 5.6 L15.7 12.4 L13.8 11.2 L11.6 13.4 L10.5 12 Q7 11.8 4 13 Z" fill="none" stroke="#BFC1C6" stroke-width="1" stroke-linejoin="round"/></svg>
<div class="t" style="left:122.2px;top:946px;font:12px/12px 'Liberation Sans',sans-serif;color:#DFE1E5;letter-spacing:0.389px;-webkit-text-stroke:0.2px #DFE1E5;">phpMyAdmin</div>
<svg style="left:123px;top:969px;" width="16" height="15" viewBox="0 0 16 15"><path d="M2.5 3.3V8.9Q0 8.9 0 6.1Q0 3.3 2.5 3.3Z" fill="#9AA0A6"/><path d="M5 1.1H10V11H5Q3 11 3 9V3Q3 1.1 5 1.1Z" fill="#9AA0A6"/><rect x="10" y="2" width="4" height="2" fill="#9AA0A6"/><rect x="10" y="8" width="4" height="2" fill="#9AA0A6"/><circle cx="13" cy="12.3" r="2" fill="#1ED31E"/></svg>
<div class="t" style="left:141.4px;top:970px;font:12px/12px 'Liberation Sans',sans-serif;color:#DFE1E5;letter-spacing:-0.100px;-webkit-text-stroke:0.2px #DFE1E5;">default</div>
<div class="t" style="left:183.2px;top:970px;font:12px/12px 'Liberation Sans',sans-serif;color:#6F737A;letter-spacing:-0.150px;transform:scaleX(0.9506);transform-origin:0px 0;-webkit-text-stroke:0.2px #6F737A;">29 ms</div>
<svg style="left:104px;top:997px;" width="10" height="6" viewBox="0 0 10 6"><path d="M1 0.8 L5 4.8 L9 0.8" fill="none" stroke="#B4B8BF" stroke-width="1.1"/></svg>
<svg style="left:123px;top:993px;" width="16" height="15" viewBox="0 0 16 15"><path d="M2.5 3.3V8.9Q0 8.9 0 6.1Q0 3.3 2.5 3.3Z" fill="#9AA0A6"/><path d="M5 1.1H10V11H5Q3 11 3 9V3Q3 1.1 5 1.1Z" fill="#9AA0A6"/><rect x="10" y="2" width="4" height="2" fill="#9AA0A6"/><rect x="10" y="8" width="4" height="2" fill="#9AA0A6"/><circle cx="13" cy="12.3" r="2" fill="#1ED31E"/></svg>
<div class="t" style="left:141.4px;top:994px;font:12px/12px 'Liberation Sans',sans-serif;color:#DFE1E5;letter-spacing:-0.150px;transform:scaleX(0.9878);transform-origin:0px 0;-webkit-text-stroke:0.2px #DFE1E5;">console</div>
<div class="t" style="left:186.9px;top:994px;font:12px/12px 'Liberation Sans',sans-serif;color:#6F737A;letter-spacing:-0.150px;transform:scaleX(0.9537);transform-origin:0px 0;-webkit-text-stroke:0.2px #6F737A;">26 ms</div>
<svg style="left:138px;top:1014px;" width="21" height="18" viewBox="0 0 21 18"><path d="M4 13 L7.5 10 Q11 8 13.8 6.6 L15.6 4.2 L18.7 4.2 L16.6 5.6 L15.7 12.4 L13.8 11.2 L11.6 13.4 L10.5 12 Q7 11.8 4 13 Z" fill="none" stroke="#BFC1C6" stroke-width="1" stroke-linejoin="round"/></svg>
<div class="t" style="left:160.5px;top:1018px;font:12px/12px 'Liberation Sans',sans-serif;color:#DFE1E5;letter-spacing:-0.150px;transform:scaleX(0.9878);transform-origin:0px 0;-webkit-text-stroke:0.2px #DFE1E5;">console</div>
<div class="t" style="left:206.3px;top:1018px;font:12px/12px 'Liberation Sans',sans-serif;color:#6F737A;letter-spacing:-0.150px;transform:scaleX(0.9475);transform-origin:0px 0;-webkit-text-stroke:0.2px #6F737A;">26 ms</div>
<svg style="left:104px;top:1045px;" width="10" height="6" viewBox="0 0 10 6"><path d="M1 0.8 L5 4.8 L9 0.8" fill="none" stroke="#B4B8BF" stroke-width="1.1"/></svg>
<svg style="left:123px;top:1041px;" width="16" height="15" viewBox="0 0 16 15"><path d="M2.5 3.3V8.9Q0 8.9 0 6.1Q0 3.3 2.5 3.3Z" fill="#9AA0A6"/><path d="M5 1.1H10V11H5Q3 11 3 9V3Q3 1.1 5 1.1Z" fill="#9AA0A6"/><rect x="10" y="2" width="4" height="2" fill="#9AA0A6"/><rect x="10" y="8" width="4" height="2" fill="#9AA0A6"/><circle cx="13" cy="12.3" r="2" fill="#1ED31E"/></svg>
<div class="t" style="left:141.4px;top:1042px;font:12px/12px 'Liberation Sans',sans-serif;color:#DFE1E5;letter-spacing:0.200px;-webkit-text-stroke:0.2px #DFE1E5;">numericno</div>
<div class="t" style="left:204.7px;top:1042px;font:12px/12px 'Liberation Sans',sans-serif;color:#6F737A;letter-spacing:-0.150px;transform:scaleX(0.9464);transform-origin:0px 0;-webkit-text-stroke:0.2px #6F737A;">107 ms</div>
<svg style="left:142px;top:1065px;" width="14" height="12" viewBox="0 0 14 12"><rect x="0" y="0" width="14" height="12" fill="#A9AEB5"/><rect x="1" y="3" width="3" height="2" fill="#1A1B1E"/><rect x="5" y="3" width="4" height="2" fill="#1A1B1E"/><rect x="10" y="3" width="3" height="2" fill="#1A1B1E"/><rect x="1" y="6" width="3" height="2" fill="#1A1B1E"/><rect x="5" y="6" width="4" height="2" fill="#1A1B1E"/><rect x="10" y="6" width="3" height="2" fill="#1A1B1E"/><rect x="1" y="9" width="3" height="2" fill="#1A1B1E"/><rect x="5" y="9" width="4" height="2" fill="#1A1B1E"/><rect x="10" y="9" width="3" height="2" fill="#1A1B1E"/></svg>
<div class="t" style="left:160.5px;top:1066px;font:12px/12px 'Liberation Sans',sans-serif;color:#DFE1E5;letter-spacing:0.162px;-webkit-text-stroke:0.2px #DFE1E5;">numericno</div>
<div class="t" style="left:223.9px;top:1066px;font:12px/12px 'Liberation Sans',sans-serif;color:#6F737A;letter-spacing:-0.150px;transform:scaleX(0.9359);transform-origin:0px 0;-webkit-text-stroke:0.2px #6F737A;">107 ms</div>
<div class="t" style="left:803.5px;top:887px;font:14px/14px 'Liberation Mono',monospace;letter-spacing:-0.4px;white-space:pre;-webkit-text-stroke:0.25px currentColor"><span style="color:#BCBEC4">[2024-07-07 13:24:34] Connected</span></div>
<div class="t" style="left:803.5px;top:909px;font:14px/14px 'Liberation Mono',monospace;letter-spacing:-0.4px;white-space:pre;-webkit-text-stroke:0.25px currentColor"><span style="color:#BCBEC4">baza_podatkov&gt; </span><span style="color:#CF8E6D">use</span><span style="color:#BCBEC4"> baza_podatkov</span></div>
<div class="t" style="left:803.5px;top:931px;font:14px/14px 'Liberation Mono',monospace;letter-spacing:-0.4px;white-space:pre;-webkit-text-stroke:0.25px currentColor"><span style="color:#BCBEC4">[2024-07-07 13:24:34] completed in 1 ms</span></div>
<div class="t" style="left:803.5px;top:953px;font:14px/14px 'Liberation Mono',monospace;letter-spacing:-0.4px;white-space:pre;-webkit-text-stroke:0.25px currentColor"><span style="color:#BCBEC4">baza_podatkov&gt; </span><span style="color:#CF8E6D">SELECT</span><span style="color:#BCBEC4"> t.*</span></div>
<div class="t" style="left:803.5px;top:975px;font:14px/14px 'Liberation Mono',monospace;letter-spacing:-0.4px;white-space:pre;-webkit-text-stroke:0.25px currentColor"><span style="color:#BCBEC4">               </span><span style="color:#CF8E6D">FROM</span><span style="color:#BCBEC4"> baza_podatkov.numericno t</span></div>
<div class="t" style="left:803.5px;top:997px;font:14px/14px 'Liberation Mono',monospace;letter-spacing:-0.4px;white-space:pre;-webkit-text-stroke:0.25px currentColor"><span style="color:#BCBEC4">               </span><span style="color:#CF8E6D">LIMIT</span><span style="color:#BCBEC4"> </span><span style="color:#2AACB8">501</span></div>
<div class="t" style="left:803.5px;top:1019px;font:14px/14px 'Liberation Mono',monospace;letter-spacing:-0.4px;white-space:pre;-webkit-text-stroke:0.25px currentColor"><span style="color:#BCBEC4">[2024-07-07 13:24:34] 10 rows retrieved starting from 1 in 71 ms (execution: 3 ms, fetching: 68 ms)</span></div>
<svg style="left:2516px;top:889px;" width="14" height="14" viewBox="0 0 14 14"><path d="M0 1H13M0 5.5H11Q13.5 5.5 13.5 8.5Q13.5 11.5 11 11.5H8" fill="none" stroke="#BBBDC1" stroke-width="1.4"/><path d="M0 11.5H3" stroke="#BBBDC1" stroke-width="1.4"/><path d="M9 9L6.5 11.5L9 14Z" fill="#BBBDC1"/></svg>
<div style="left:2512px;top:912px;width:22px;height:22px;background:#43454A;border-radius:4px"></div>
<svg style="left:2516px;top:916px;" width="14" height="13" viewBox="0 0 14 13"><path d="M0 3H4M0 7H4M0 12H14" stroke="#BBBDC1" stroke-width="1.4"/><path d="M9 0V7M6 5L9 8L12 5" fill="none" stroke="#BBBDC1" stroke-width="1.4"/></svg>
<svg style="left:2516px;top:942px;" width="15" height="14" viewBox="0 0 15 14"><rect x="3" y="0" width="9" height="2.5" fill="#BBBDC1"/><rect x="0" y="4" width="15" height="5" fill="#BBBDC1"/><rect x="3.5" y="8.5" width="8" height="5" fill="none" stroke="#BBBDC1" stroke-width="1.2"/></svg>
<svg style="left:2517px;top:967px;" width="12" height="14" viewBox="0 0 12 14"><rect x="0" y="1.5" width="12" height="1.5" fill="#BBBDC1"/><rect x="4" y="0" width="4" height="1.5" fill="#BBBDC1"/><path d="M1.5 4H10.5L10 14H2Z" fill="#BBBDC1"/></svg>
<div style="left:558px;top:1357px;width:77px;height:22px;background:#3574F0;"></div>
<svg style="left:35px;top:1361px;" width="12" height="14" viewBox="0 0 12 14"><circle cx="3" cy="2" r="1.8" fill="#BBBDC1"/><circle cx="3" cy="12" r="1.8" fill="#BBBDC1"/><circle cx="10" cy="4" r="1.8" fill="#BBBDC1"/><path d="M3 2V12M3 10Q10 9 10 4" fill="none" stroke="#BBBDC1" stroke-width="1.4"/></svg>
<div class="t" style="left:51.1px;top:1363px;font:12px/12px 'Liberation Sans',sans-serif;color:#DFE1E5;letter-spacing:-0.093px;-webkit-text-stroke:0.2px #DFE1E5;">Version Control</div>
<svg style="left:154px;top:1361px;" width="13" height="13" viewBox="0 0 13 13"><circle cx="5.5" cy="5.5" r="4.3" fill="none" stroke="#BBBDC1" stroke-width="1.6"/><path d="M8.5 8.5L12.5 12.5" stroke="#BBBDC1" stroke-width="1.8"/></svg>
<div class="t" style="left:171px;top:1363px;font:12px/12px 'Liberation Sans',sans-serif;color:#DFE1E5;letter-spacing:-0.100px;-webkit-text-stroke:0.2px #DFE1E5;">Find</div>
<svg style="left:214px;top:1362px;" width="12" height="11" viewBox="0 0 12 11"><path d="M0 1H2M0 5H2M0 9H2M4 1H12M4 5H12M4 9H12" stroke="#BBBDC1" stroke-width="1.6"/></svg>
<div class="t" style="left:229.7px;top:1363px;font:12px/12px 'Liberation Sans',sans-serif;color:#DFE1E5;letter-spacing:-0.150px;transform:scaleX(0.9538);transform-origin:0px 0;-webkit-text-stroke:0.2px #DFE1E5;">TODO</div>
<svg style="left:283px;top:1359px;" width="16" height="17" viewBox="0 0 16 17"><path d="M8 0H12V6H4V3Z" fill="#8E9399"/><rect x="0" y="8" width="16" height="9" fill="#7A5CAE"/><text x="0.5" y="16" font-family="Liberation Sans" font-weight="bold" font-size="7" fill="#B8A8E0">PHP</text></svg>
<div class="t" style="left:303px;top:1363px;font:12px/12px 'Liberation Sans',sans-serif;color:#DFE1E5;letter-spacing:-0.150px;transform:scaleX(0.8696);transform-origin:0px 0;-webkit-text-stroke:0.2px #DFE1E5;">PHP-CGI Server</div>
<svg style="left:403px;top:1361px;" width="12" height="12" viewBox="0 0 12 12"><circle cx="6" cy="6" r="6" fill="#BBBDC1"/><rect x="5" y="2.5" width="2" height="5" fill="#2B2D30"/><rect x="5" y="8.5" width="2" height="1.8" fill="#2B2D30"/></svg>
<div class="t" style="left:419.2px;top:1363px;font:12px/12px 'Liberation Sans',sans-serif;color:#DFE1E5;letter-spacing:-0.150px;transform:scaleX(0.9249);transform-origin:0px 0;-webkit-text-stroke:0.2px #DFE1E5;">Problems</div>
<svg style="left:488px;top:1362px;" width="12" height="11" viewBox="0 0 12 11"><rect x="0" y="0" width="12" height="11" fill="#BBBDC1"/><path d="M2 3L5 5.5L2 8" fill="none" stroke="#2B2D30" stroke-width="1.3"/><rect x="5.5" y="8" width="4" height="1.3" fill="#2B2D30"/></svg>
<div class="t" style="left:503.7px;top:1363px;font:12px/12px 'Liberation Sans',sans-serif;color:#DFE1E5;letter-spacing:-0.143px;-webkit-text-stroke:0.2px #DFE1E5;">Terminal</div>
<svg style="left:569px;top:1361px;" width="13" height="13" viewBox="0 0 13 13"><path d="M6.5 0L12.5 3.5V9.5L6.5 13L0.5 9.5V3.5Z" fill="#9DB8F5"/><path d="M5 4L9.5 6.5L5 9Z" fill="#3574F0"/></svg>
<div class="t" style="left:586px;top:1363px;font:12px/12px 'Liberation Sans',sans-serif;color:#FFFFFF;letter-spacing:-0.150px;transform:scaleX(0.8832);transform-origin:0px 0;-webkit-text-stroke:0.2px #FFFFFF;">Services</div>
<svg style="left:12px;top:1384px;" width="13" height="13" viewBox="0 0 13 13"><rect x="3.5" y="0.5" width="9" height="9" fill="none" stroke="#BBBDC1"/><path d="M0.5 3V12.5H10" fill="none" stroke="#BBBDC1"/></svg>
<div class="t" style="left:39.6px;top:1384px;font:12px/12px 'Liberation Sans',sans-serif;color:#A8ADB3;letter-spacing:-0.092px;-webkit-text-stroke:0.2px #A8ADB3;">10 rows retrieved starting from 1 in 71 ms (execution: 3 ms, fetching: 68 ms)</div>
<div class="t" style="left:2328.4px;top:1384px;font:12px/12px 'Liberation Sans',sans-serif;color:#A8ADB3;letter-spacing:-0.150px;transform:scaleX(0.9180);transform-origin:0px 0;-webkit-text-stroke:0.2px #A8ADB3;">PHP: 8.3</div>
<div class="t" style="left:2384.2px;top:1384px;font:12px/12px 'Liberation Sans',sans-serif;color:#A8ADB3;letter-spacing:-0.150px;transform:scaleX(0.9070);transform-origin:0px 0;-webkit-text-stroke:0.2px #A8ADB3;">SUM: 1</div>
<div class="t" style="left:2433.4px;top:1384px;font:12px/12px 'Liberation Sans',sans-serif;color:#A8ADB3;letter-spacing:0.000px;-webkit-text-stroke:0.2px #A8ADB3;">1</div>
<div class="t" style="left:2439.8px;top:1384px;font:12px/12px 'Liberation Sans',sans-serif;color:#A8ADB3;letter-spacing:0.000px;-webkit-text-stroke:0.2px #A8ADB3;">:</div>
<div class="t" style="left:2443.2px;top:1384px;font:12px/12px 'Liberation Sans',sans-serif;color:#A8ADB3;letter-spacing:0.000px;-webkit-text-stroke:0.2px #A8ADB3;">1</div>
<svg style="left:2460px;top:1384px;" width="14" height="14" viewBox="0 0 14 14"><path d="M13 1Q4 0 2 5Q0 12 6 13Q12 12 13 1Z" fill="none" stroke="#BBBDC1" stroke-width="1.2"/></svg>
<svg style="left:2486.8px;top:1384px;" width="16" height="16" viewBox="0 0 16 16"><path d="M2.2 4.8C0.7 3.6 0.7 1.4 2.2 0.2M5.2 4.8C3.7 3.6 3.7 1.4 5.2 0.2M8.2 4.8C6.7 3.6 6.7 1.4 8.2 0.2" fill="none" stroke="#BEC0C4" stroke-width="0.9"/><path d="M10.6 1.3H12.9Q14.4 1.3 14.4 2.8V12.2Q14.4 13.7 12.9 13.7H10.6" fill="none" stroke="#BEC0C4" stroke-width="2"/><rect x="1.6" y="7.6" width="5.6" height="7.4" rx="2.6" fill="#4DA64D"/><path d="M0 9.5H8.8M0 11.5H8.8M0 13.5H8.8M2.6 7.9L1.9 6.6M6.2 7.9L6.9 6.6" stroke="#4DA64D" stroke-width="1.1"/><rect x="2.9" y="9.9" width="3" height="1.1" fill="#2B2D30"/><rect x="2.9" y="11.9" width="3" height="1.1" fill="#2B2D30"/></svg>
<svg style="left:2512px;top:1384px;" width="13" height="13" viewBox="0 0 13 13"><path d="M12.5 5.5H6.5V7.5H10.5A4.2 4.2 0 1 1 9.5 3.5L11 2A6.3 6.3 0 1 0 12.5 5.5Z" fill="#4285F4"/><path d="M2.6 3.2L4.3 4.5A4.2 4.2 0 0 1 9.5 3.5L11 2A6.3 6.3 0 0 0 2.6 3.2Z" fill="#EA4335"/><path d="M2.6 3.2A6.3 6.3 0 0 0 2.5 9.6L4.2 8.3A4.2 4.2 0 0 1 4.3 4.5Z" fill="#FBBC05"/><path d="M2.5 9.6A6.3 6.3 0 0 0 11.2 11L9.5 9.8A4.2 4.2 0 0 1 4.2 8.3Z" fill="#34A853"/></svg>
<svg style="left:2534px;top:1383px;" width="13" height="13" viewBox="0 0 13 13"><path d="M2 6V3.2A2.6 2.6 0 0 1 7.2 3.2" fill="none" stroke="#B8BABF" stroke-width="1.5"/><rect x="4" y="5.5" width="8" height="6.5" fill="#B8BABF"/></svg>
</body></html>
